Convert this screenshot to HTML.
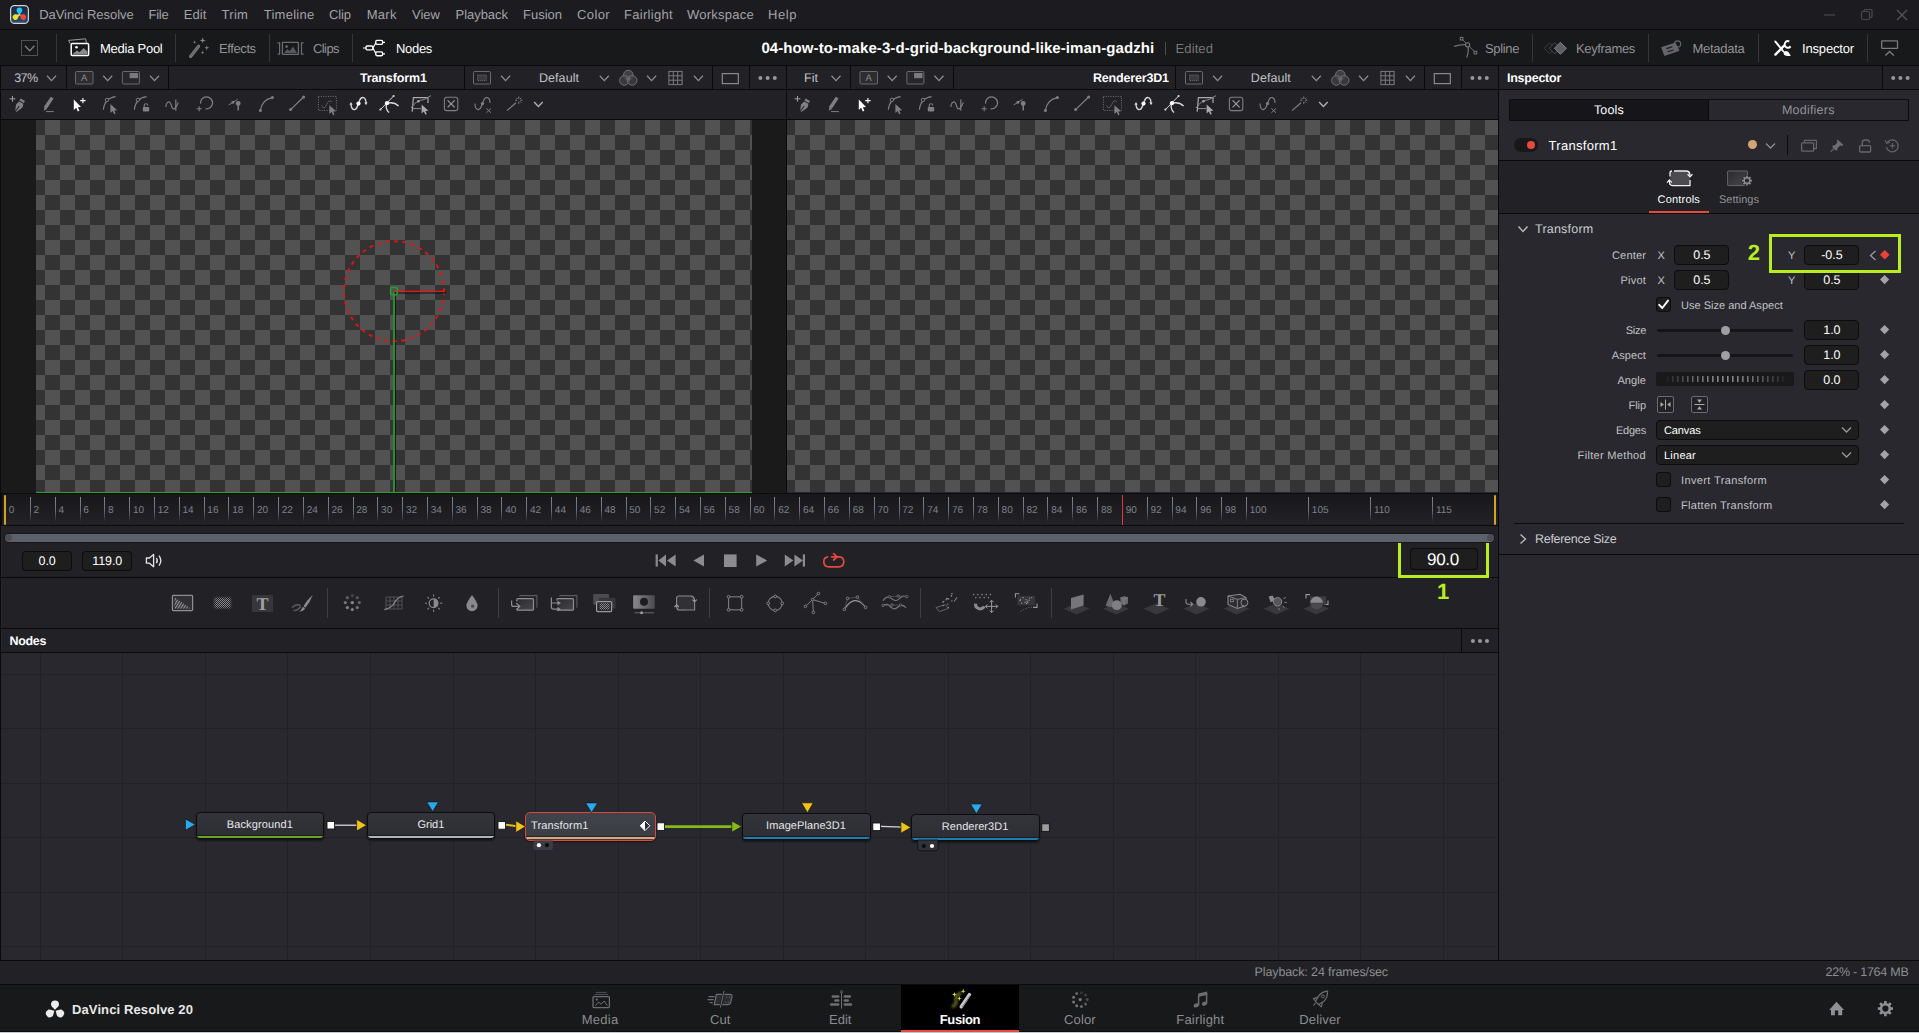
<!DOCTYPE html>
<html lang="en"><head><meta charset="utf-8"><title>DaVinci Resolve - Fusion</title>
<style>
html,body{margin:0;padding:0;background:#28282e;}
body{text-rendering:geometricPrecision;width:1919px;height:1033px;position:relative;overflow:hidden;font-family:"Liberation Sans",sans-serif;}
#app{position:absolute;left:0;top:0;width:1919px;height:1033px;overflow:hidden;}
#app div,#app span,#app svg{position:absolute;display:block;}
#app span{white-space:pre;}
#app svg{overflow:visible;}
</style></head><body><div id="app">
<div style="left:0px;top:0px;width:1919px;height:29px;background:#1c1b20;"></div>
<div style="left:0px;top:29px;width:1919px;height:1px;background:#0a0a0b;"></div>
<div style="left:0px;top:30px;width:1919px;height:35px;background:#18191b;"></div>
<div style="left:0px;top:65px;width:1919px;height:1px;background:#0a0a0b;"></div>
<div style="left:0px;top:66px;width:1498px;height:23px;background:#212126;"></div>
<div style="left:0px;top:89px;width:1498px;height:1px;background:#0a0a0b;"></div>
<div style="left:0px;top:90px;width:1498px;height:29px;background:#212126;"></div>
<div style="left:0px;top:119px;width:1498px;height:1px;background:#0a0a0b;"></div>
<div style="left:1px;top:120px;width:785px;height:373px;background:#1a1a1a;"></div>
<div style="left:36px;top:120px;width:716px;height:372px;background-image:conic-gradient(#525252 25%,#333333 0 50%,#525252 0 75%,#333333 0);background-size:30px 30px;background-position:-6px 0px;"></div>
<div style="left:36px;top:492px;width:716px;height:1px;background:#2ba334;"></div>
<div style="left:787px;top:120px;width:711px;height:372px;background-image:conic-gradient(#525252 25%,#333333 0 50%,#525252 0 75%,#333333 0);background-size:30px 30px;background-position:-7px 0px;"></div>
<div style="left:786px;top:66px;width:1px;height:427px;background:#0a0a0b;"></div>
<div style="left:0px;top:66px;width:1px;height:919px;background:#0a0a0b;"></div>
<div style="left:1498px;top:66px;width:1px;height:895px;background:#0a0a0b;"></div>
<div style="left:0px;top:493px;width:1498px;height:1px;background:#0a0a0b;"></div>
<div style="left:2px;top:494px;width:1496px;height:31px;background:linear-gradient(#18181b,#222227);"></div>
<div style="left:0px;top:525px;width:1498px;height:1px;background:#0a0a0b;"></div>
<div style="left:0px;top:493px;width:2px;height:33px;background:#0a0a0b;"></div>
<div style="left:2px;top:526px;width:1496px;height:51px;background:#212126;"></div>
<div style="left:0px;top:577px;width:1498px;height:1px;background:#0a0a0b;"></div>
<div style="left:2px;top:578px;width:1496px;height:50px;background:#212126;"></div>
<div style="left:0px;top:628px;width:1498px;height:1px;background:#0a0a0b;"></div>
<div style="left:2px;top:629px;width:1496px;height:23px;background:#212126;"></div>
<div style="left:0px;top:652px;width:1498px;height:1px;background:#0a0a0b;"></div>
<div style="left:1px;top:653px;width:1497px;height:307px;background:#28282e;"></div>
<div style="left:40px;top:653px;width:1px;height:307px;background:#212126;"></div>
<div style="left:122px;top:653px;width:1px;height:307px;background:#212126;"></div>
<div style="left:205px;top:653px;width:1px;height:307px;background:#212126;"></div>
<div style="left:287px;top:653px;width:1px;height:307px;background:#212126;"></div>
<div style="left:370px;top:653px;width:1px;height:307px;background:#212126;"></div>
<div style="left:453px;top:653px;width:1px;height:307px;background:#212126;"></div>
<div style="left:535px;top:653px;width:1px;height:307px;background:#212126;"></div>
<div style="left:618px;top:653px;width:1px;height:307px;background:#212126;"></div>
<div style="left:700px;top:653px;width:1px;height:307px;background:#212126;"></div>
<div style="left:783px;top:653px;width:1px;height:307px;background:#212126;"></div>
<div style="left:865px;top:653px;width:1px;height:307px;background:#212126;"></div>
<div style="left:948px;top:653px;width:1px;height:307px;background:#212126;"></div>
<div style="left:1030px;top:653px;width:1px;height:307px;background:#212126;"></div>
<div style="left:1113px;top:653px;width:1px;height:307px;background:#212126;"></div>
<div style="left:1195px;top:653px;width:1px;height:307px;background:#212126;"></div>
<div style="left:1278px;top:653px;width:1px;height:307px;background:#212126;"></div>
<div style="left:1360px;top:653px;width:1px;height:307px;background:#212126;"></div>
<div style="left:1443px;top:653px;width:1px;height:307px;background:#212126;"></div>
<div style="left:1px;top:674px;width:1497px;height:1px;background:#212126;"></div>
<div style="left:1px;top:728px;width:1497px;height:1px;background:#212126;"></div>
<div style="left:1px;top:783px;width:1497px;height:1px;background:#212126;"></div>
<div style="left:1px;top:837px;width:1497px;height:1px;background:#212126;"></div>
<div style="left:1px;top:892px;width:1497px;height:1px;background:#212126;"></div>
<div style="left:1px;top:946px;width:1497px;height:1px;background:#212126;"></div>
<div style="left:0px;top:960px;width:1919px;height:1px;background:#0a0a0b;"></div>
<div style="left:0px;top:961px;width:1919px;height:23px;background:#212126;"></div>
<div style="left:0px;top:984px;width:1919px;height:1px;background:#0a0a0b;"></div>
<div style="left:0px;top:985px;width:1919px;height:47px;background:#18191b;"></div>
<div style="left:0px;top:1031px;width:1919px;height:1px;background:#0b0c0e;"></div>
<div style="left:901px;top:985px;width:118px;height:47px;background:#000;"></div>
<div style="left:901px;top:1030px;width:118px;height:2px;background:#f0483a;"></div>
<div style="left:0px;top:1032px;width:1919px;height:1px;background:#c4c8d0;"></div>
<div style="left:901px;top:1032px;width:118px;height:1px;background:#b2c8d0;"></div>
<div style="left:1499px;top:66px;width:420px;height:23px;background:#212126;"></div>
<div style="left:1499px;top:89px;width:420px;height:1px;background:#0a0a0b;"></div>
<div style="left:1499px;top:90px;width:420px;height:870px;background:#28282e;"></div>
<span style="left:39.20px;top:6px;font-size:13px;line-height:18px;color:#a3a3a7;letter-spacing:-0.042px;">DaVinci Resolve</span>
<span style="left:148.50px;top:6px;font-size:13px;line-height:18px;color:#a3a3a7;letter-spacing:-0.237px;">File</span>
<span style="left:183.70px;top:6px;font-size:13px;line-height:18px;color:#a3a3a7;letter-spacing:0.100px;">Edit</span>
<span style="left:221.50px;top:6px;font-size:13px;line-height:18px;color:#a3a3a7;letter-spacing:0.299px;">Trim</span>
<span style="left:263.70px;top:6px;font-size:13px;line-height:18px;color:#a3a3a7;letter-spacing:0.270px;">Timeline</span>
<span style="left:329.00px;top:6px;font-size:13px;line-height:18px;color:#a3a3a7;letter-spacing:-0.099px;">Clip</span>
<span style="left:366.70px;top:6px;font-size:13px;line-height:18px;color:#a3a3a7;letter-spacing:0.278px;">Mark</span>
<span style="left:412.00px;top:6px;font-size:13px;line-height:18px;color:#a3a3a7;letter-spacing:0.015px;">View</span>
<span style="left:455.50px;top:6px;font-size:13px;line-height:18px;color:#a3a3a7;letter-spacing:-0.031px;">Playback</span>
<span style="left:523.00px;top:6px;font-size:13px;line-height:18px;color:#a3a3a7;letter-spacing:-0.003px;">Fusion</span>
<span style="left:577.00px;top:6px;font-size:13px;line-height:18px;color:#a3a3a7;letter-spacing:0.387px;">Color</span>
<span style="left:624.00px;top:6px;font-size:13px;line-height:18px;color:#a3a3a7;letter-spacing:0.307px;">Fairlight</span>
<span style="left:687.00px;top:6px;font-size:13px;line-height:18px;color:#a3a3a7;letter-spacing:0.247px;">Workspace</span>
<span style="left:768.00px;top:6px;font-size:13px;line-height:18px;color:#a3a3a7;letter-spacing:0.566px;">Help</span>
<span style="left:100.00px;top:40px;font-size:13px;line-height:18px;color:#ffffff;letter-spacing:-0.253px;">Media Pool</span>
<span style="left:219.00px;top:40px;font-size:13px;line-height:18px;color:#929296;letter-spacing:-0.400px;">Effects</span>
<span style="left:313.00px;top:40px;font-size:13px;line-height:18px;color:#929296;letter-spacing:-0.579px;">Clips</span>
<span style="left:396.00px;top:40px;font-size:13px;line-height:18px;color:#ffffff;letter-spacing:-0.315px;">Nodes</span>
<span style="left:761.40px;top:39px;font-size:15px;line-height:20px;color:#ffffff;letter-spacing:0.090px;font-weight:700;">04-how-to-make-3-d-grid-background-like-iman-gadzhi</span>
<span style="left:1175.60px;top:40px;font-size:13px;line-height:18px;color:#77777b;letter-spacing:0.090px;">Edited</span>
<span style="left:1485.00px;top:40px;font-size:13px;line-height:18px;color:#929296;letter-spacing:-0.356px;">Spline</span>
<span style="left:1576.00px;top:40px;font-size:13px;line-height:18px;color:#929296;letter-spacing:-0.348px;">Keyframes</span>
<span style="left:1692.40px;top:40px;font-size:13px;line-height:18px;color:#929296;letter-spacing:-0.250px;">Metadata</span>
<span style="left:1802.00px;top:40px;font-size:13px;line-height:18px;color:#ffffff;letter-spacing:-0.163px;">Inspector</span>
<div style="left:56.0px;top:34px;width:1px;height:28px;background:#36363b;"></div>
<div style="left:175.0px;top:34px;width:1px;height:28px;background:#36363b;"></div>
<div style="left:268.5px;top:34px;width:1px;height:28px;background:#36363b;"></div>
<div style="left:351.5px;top:34px;width:1px;height:28px;background:#36363b;"></div>
<div style="left:1531.5px;top:34px;width:1px;height:28px;background:#36363b;"></div>
<div style="left:1647.5px;top:34px;width:1px;height:28px;background:#36363b;"></div>
<div style="left:1757.5px;top:34px;width:1px;height:28px;background:#36363b;"></div>
<div style="left:1866.5px;top:34px;width:1px;height:28px;background:#36363b;"></div>
<div style="left:1164.5px;top:42px;width:1px;height:13px;background:#4a4a4f;"></div>
<span style="left:14.20px;top:70px;font-size:12.5px;line-height:16px;color:#c2c2c6;letter-spacing:-0.573px;">37%</span>
<span style="left:804.00px;top:70px;font-size:12.5px;line-height:16px;color:#c2c2c6;letter-spacing:0.038px;">Fit</span>
<span style="left:360.00px;top:70px;font-size:12.5px;line-height:16px;color:#ffffff;letter-spacing:-0.138px;font-weight:700;">Transform1</span>
<span style="left:1093.00px;top:70px;font-size:12.5px;line-height:16px;color:#ffffff;letter-spacing:-0.183px;font-weight:700;">Renderer3D1</span>
<span style="left:539.00px;top:70px;font-size:12.5px;line-height:16px;color:#c2c2c6;letter-spacing:0.057px;">Default</span>
<span style="left:1250.80px;top:70px;font-size:12.5px;line-height:16px;color:#c2c2c6;letter-spacing:0.057px;">Default</span>
<div style="left:66px;top:66px;width:1px;height:23px;background:#0a0a0b;"></div>
<div style="left:168px;top:66px;width:1px;height:23px;background:#0a0a0b;"></div>
<div style="left:464px;top:66px;width:1px;height:23px;background:#0a0a0b;"></div>
<div style="left:712px;top:66px;width:1px;height:23px;background:#0a0a0b;"></div>
<div style="left:749px;top:66px;width:1px;height:23px;background:#0a0a0b;"></div>
<div style="left:850px;top:66px;width:1px;height:23px;background:#0a0a0b;"></div>
<div style="left:953px;top:66px;width:1px;height:23px;background:#0a0a0b;"></div>
<div style="left:1175px;top:66px;width:1px;height:23px;background:#0a0a0b;"></div>
<div style="left:1424px;top:66px;width:1px;height:23px;background:#0a0a0b;"></div>
<div style="left:1461px;top:66px;width:1px;height:23px;background:#0a0a0b;"></div>
<div style="left:1882px;top:66px;width:1px;height:23px;background:#0a0a0b;"></div>
<span style="left:1507.00px;top:70px;font-size:12.5px;line-height:16px;color:#ffffff;letter-spacing:-0.251px;font-weight:700;">Inspector</span>
<div style="left:23px;top:552px;width:48px;height:18px;background:#1e1e1f;border-radius:3px;box-shadow:0 0 0 1px #0c0c0d;"></div>
<div style="left:83px;top:552px;width:48px;height:18px;background:#1e1e1f;border-radius:3px;box-shadow:0 0 0 1px #0c0c0d;"></div>
<span style="left:38.54px;top:553px;font-size:12.5px;line-height:16px;color:#ffffff;letter-spacing:-0.087px;">0.0</span>
<span style="left:92.25px;top:553px;font-size:12.5px;line-height:16px;color:#ffffff;letter-spacing:-0.091px;">119.0</span>
<div style="left:1411px;top:549px;width:66px;height:20px;background:#1e1e1f;border-radius:3px;box-shadow:0 0 0 1px #0c0c0d;"></div>
<span style="left:1427.12px;top:549px;font-size:17px;line-height:22px;color:#ffffff;letter-spacing:-0.331px;">90.0</span>
<div style="left:1398px;top:540px;width:85px;height:32px;border:3px solid #b8ee1e;"></div>
<span style="left:1437.08px;top:577px;font-size:22px;line-height:30px;color:#b8ee1e;letter-spacing:0.000px;font-weight:700;">1</span>
<span style="left:9.50px;top:633px;font-size:12.5px;line-height:16px;color:#ffffff;letter-spacing:-0.340px;font-weight:700;">Nodes</span>
<span style="left:1254.60px;top:964px;font-size:12.5px;line-height:16px;color:#8e8e92;letter-spacing:-0.120px;">Playback: 24 frames/sec</span>
<span style="left:1825.50px;top:964px;font-size:12.5px;line-height:16px;color:#8e8e92;letter-spacing:-0.242px;">22% - 1764 MB</span>
<span style="left:8.80px;top:504px;font-size:10px;line-height:14px;color:#7e8189;letter-spacing:0.000px;">0</span>
<div style="left:29.8px;top:497px;width:1px;height:25px;background:linear-gradient(#84848a,#6c6c72 55%,rgba(106,106,112,0));"></div>
<span style="left:33.62px;top:504px;font-size:10px;line-height:14px;color:#7e8189;letter-spacing:0.000px;">2</span>
<div style="left:54.6px;top:497px;width:1px;height:25px;background:linear-gradient(#84848a,#6c6c72 55%,rgba(106,106,112,0));"></div>
<span style="left:58.44px;top:504px;font-size:10px;line-height:14px;color:#7e8189;letter-spacing:0.000px;">4</span>
<div style="left:79.5px;top:497px;width:1px;height:25px;background:linear-gradient(#84848a,#6c6c72 55%,rgba(106,106,112,0));"></div>
<span style="left:83.26px;top:504px;font-size:10px;line-height:14px;color:#7e8189;letter-spacing:0.000px;">6</span>
<div style="left:104.3px;top:497px;width:1px;height:25px;background:linear-gradient(#84848a,#6c6c72 55%,rgba(106,106,112,0));"></div>
<span style="left:108.08px;top:504px;font-size:10px;line-height:14px;color:#7e8189;letter-spacing:0.000px;">8</span>
<div style="left:129.1px;top:497px;width:1px;height:25px;background:linear-gradient(#84848a,#6c6c72 55%,rgba(106,106,112,0));"></div>
<span style="left:132.90px;top:504px;font-size:10px;line-height:14px;color:#7e8189;letter-spacing:-0.000px;">10</span>
<div style="left:153.9px;top:497px;width:1px;height:25px;background:linear-gradient(#84848a,#6c6c72 55%,rgba(106,106,112,0));"></div>
<span style="left:157.72px;top:504px;font-size:10px;line-height:14px;color:#7e8189;letter-spacing:-0.000px;">12</span>
<div style="left:178.7px;top:497px;width:1px;height:25px;background:linear-gradient(#84848a,#6c6c72 55%,rgba(106,106,112,0));"></div>
<span style="left:182.54px;top:504px;font-size:10px;line-height:14px;color:#7e8189;letter-spacing:-0.000px;">14</span>
<div style="left:203.6px;top:497px;width:1px;height:25px;background:linear-gradient(#84848a,#6c6c72 55%,rgba(106,106,112,0));"></div>
<span style="left:207.36px;top:504px;font-size:10px;line-height:14px;color:#7e8189;letter-spacing:-0.000px;">16</span>
<div style="left:228.4px;top:497px;width:1px;height:25px;background:linear-gradient(#84848a,#6c6c72 55%,rgba(106,106,112,0));"></div>
<span style="left:232.18px;top:504px;font-size:10px;line-height:14px;color:#7e8189;letter-spacing:-0.000px;">18</span>
<div style="left:253.2px;top:497px;width:1px;height:25px;background:linear-gradient(#84848a,#6c6c72 55%,rgba(106,106,112,0));"></div>
<span style="left:257.00px;top:504px;font-size:10px;line-height:14px;color:#7e8189;letter-spacing:-0.000px;">20</span>
<div style="left:278.0px;top:497px;width:1px;height:25px;background:linear-gradient(#84848a,#6c6c72 55%,rgba(106,106,112,0));"></div>
<span style="left:281.82px;top:504px;font-size:10px;line-height:14px;color:#7e8189;letter-spacing:-0.000px;">22</span>
<div style="left:302.8px;top:497px;width:1px;height:25px;background:linear-gradient(#84848a,#6c6c72 55%,rgba(106,106,112,0));"></div>
<span style="left:306.64px;top:504px;font-size:10px;line-height:14px;color:#7e8189;letter-spacing:-0.000px;">24</span>
<div style="left:327.7px;top:497px;width:1px;height:25px;background:linear-gradient(#84848a,#6c6c72 55%,rgba(106,106,112,0));"></div>
<span style="left:331.46px;top:504px;font-size:10px;line-height:14px;color:#7e8189;letter-spacing:-0.000px;">26</span>
<div style="left:352.5px;top:497px;width:1px;height:25px;background:linear-gradient(#84848a,#6c6c72 55%,rgba(106,106,112,0));"></div>
<span style="left:356.28px;top:504px;font-size:10px;line-height:14px;color:#7e8189;letter-spacing:-0.000px;">28</span>
<div style="left:377.3px;top:497px;width:1px;height:25px;background:linear-gradient(#84848a,#6c6c72 55%,rgba(106,106,112,0));"></div>
<span style="left:381.10px;top:504px;font-size:10px;line-height:14px;color:#7e8189;letter-spacing:-0.000px;">30</span>
<div style="left:402.1px;top:497px;width:1px;height:25px;background:linear-gradient(#84848a,#6c6c72 55%,rgba(106,106,112,0));"></div>
<span style="left:405.92px;top:504px;font-size:10px;line-height:14px;color:#7e8189;letter-spacing:-0.000px;">32</span>
<div style="left:426.9px;top:497px;width:1px;height:25px;background:linear-gradient(#84848a,#6c6c72 55%,rgba(106,106,112,0));"></div>
<span style="left:430.74px;top:504px;font-size:10px;line-height:14px;color:#7e8189;letter-spacing:-0.000px;">34</span>
<div style="left:451.8px;top:497px;width:1px;height:25px;background:linear-gradient(#84848a,#6c6c72 55%,rgba(106,106,112,0));"></div>
<span style="left:455.56px;top:504px;font-size:10px;line-height:14px;color:#7e8189;letter-spacing:-0.000px;">36</span>
<div style="left:476.6px;top:497px;width:1px;height:25px;background:linear-gradient(#84848a,#6c6c72 55%,rgba(106,106,112,0));"></div>
<span style="left:480.38px;top:504px;font-size:10px;line-height:14px;color:#7e8189;letter-spacing:-0.000px;">38</span>
<div style="left:501.4px;top:497px;width:1px;height:25px;background:linear-gradient(#84848a,#6c6c72 55%,rgba(106,106,112,0));"></div>
<span style="left:505.20px;top:504px;font-size:10px;line-height:14px;color:#7e8189;letter-spacing:-0.000px;">40</span>
<div style="left:526.2px;top:497px;width:1px;height:25px;background:linear-gradient(#84848a,#6c6c72 55%,rgba(106,106,112,0));"></div>
<span style="left:530.02px;top:504px;font-size:10px;line-height:14px;color:#7e8189;letter-spacing:0.000px;">42</span>
<div style="left:551.0px;top:497px;width:1px;height:25px;background:linear-gradient(#84848a,#6c6c72 55%,rgba(106,106,112,0));"></div>
<span style="left:554.84px;top:504px;font-size:10px;line-height:14px;color:#7e8189;letter-spacing:0.000px;">44</span>
<div style="left:575.9px;top:497px;width:1px;height:25px;background:linear-gradient(#84848a,#6c6c72 55%,rgba(106,106,112,0));"></div>
<span style="left:579.66px;top:504px;font-size:10px;line-height:14px;color:#7e8189;letter-spacing:0.000px;">46</span>
<div style="left:600.7px;top:497px;width:1px;height:25px;background:linear-gradient(#84848a,#6c6c72 55%,rgba(106,106,112,0));"></div>
<span style="left:604.48px;top:504px;font-size:10px;line-height:14px;color:#7e8189;letter-spacing:0.000px;">48</span>
<div style="left:625.5px;top:497px;width:1px;height:25px;background:linear-gradient(#84848a,#6c6c72 55%,rgba(106,106,112,0));"></div>
<span style="left:629.30px;top:504px;font-size:10px;line-height:14px;color:#7e8189;letter-spacing:0.000px;">50</span>
<div style="left:650.3px;top:497px;width:1px;height:25px;background:linear-gradient(#84848a,#6c6c72 55%,rgba(106,106,112,0));"></div>
<span style="left:654.12px;top:504px;font-size:10px;line-height:14px;color:#7e8189;letter-spacing:0.000px;">52</span>
<div style="left:675.1px;top:497px;width:1px;height:25px;background:linear-gradient(#84848a,#6c6c72 55%,rgba(106,106,112,0));"></div>
<span style="left:678.94px;top:504px;font-size:10px;line-height:14px;color:#7e8189;letter-spacing:0.000px;">54</span>
<div style="left:700.0px;top:497px;width:1px;height:25px;background:linear-gradient(#84848a,#6c6c72 55%,rgba(106,106,112,0));"></div>
<span style="left:703.76px;top:504px;font-size:10px;line-height:14px;color:#7e8189;letter-spacing:0.000px;">56</span>
<div style="left:724.8px;top:497px;width:1px;height:25px;background:linear-gradient(#84848a,#6c6c72 55%,rgba(106,106,112,0));"></div>
<span style="left:728.58px;top:504px;font-size:10px;line-height:14px;color:#7e8189;letter-spacing:0.000px;">58</span>
<div style="left:749.6px;top:497px;width:1px;height:25px;background:linear-gradient(#84848a,#6c6c72 55%,rgba(106,106,112,0));"></div>
<span style="left:753.40px;top:504px;font-size:10px;line-height:14px;color:#7e8189;letter-spacing:0.000px;">60</span>
<div style="left:774.4px;top:497px;width:1px;height:25px;background:linear-gradient(#84848a,#6c6c72 55%,rgba(106,106,112,0));"></div>
<span style="left:778.22px;top:504px;font-size:10px;line-height:14px;color:#7e8189;letter-spacing:0.000px;">62</span>
<div style="left:799.2px;top:497px;width:1px;height:25px;background:linear-gradient(#84848a,#6c6c72 55%,rgba(106,106,112,0));"></div>
<span style="left:803.04px;top:504px;font-size:10px;line-height:14px;color:#7e8189;letter-spacing:0.000px;">64</span>
<div style="left:824.1px;top:497px;width:1px;height:25px;background:linear-gradient(#84848a,#6c6c72 55%,rgba(106,106,112,0));"></div>
<span style="left:827.86px;top:504px;font-size:10px;line-height:14px;color:#7e8189;letter-spacing:0.000px;">66</span>
<div style="left:848.9px;top:497px;width:1px;height:25px;background:linear-gradient(#84848a,#6c6c72 55%,rgba(106,106,112,0));"></div>
<span style="left:852.68px;top:504px;font-size:10px;line-height:14px;color:#7e8189;letter-spacing:0.000px;">68</span>
<div style="left:873.7px;top:497px;width:1px;height:25px;background:linear-gradient(#84848a,#6c6c72 55%,rgba(106,106,112,0));"></div>
<span style="left:877.50px;top:504px;font-size:10px;line-height:14px;color:#7e8189;letter-spacing:0.000px;">70</span>
<div style="left:898.5px;top:497px;width:1px;height:25px;background:linear-gradient(#84848a,#6c6c72 55%,rgba(106,106,112,0));"></div>
<span style="left:902.32px;top:504px;font-size:10px;line-height:14px;color:#7e8189;letter-spacing:0.000px;">72</span>
<div style="left:923.3px;top:497px;width:1px;height:25px;background:linear-gradient(#84848a,#6c6c72 55%,rgba(106,106,112,0));"></div>
<span style="left:927.14px;top:504px;font-size:10px;line-height:14px;color:#7e8189;letter-spacing:0.000px;">74</span>
<div style="left:948.2px;top:497px;width:1px;height:25px;background:linear-gradient(#84848a,#6c6c72 55%,rgba(106,106,112,0));"></div>
<span style="left:951.96px;top:504px;font-size:10px;line-height:14px;color:#7e8189;letter-spacing:0.000px;">76</span>
<div style="left:973.0px;top:497px;width:1px;height:25px;background:linear-gradient(#84848a,#6c6c72 55%,rgba(106,106,112,0));"></div>
<span style="left:976.78px;top:504px;font-size:10px;line-height:14px;color:#7e8189;letter-spacing:0.000px;">78</span>
<div style="left:997.8px;top:497px;width:1px;height:25px;background:linear-gradient(#84848a,#6c6c72 55%,rgba(106,106,112,0));"></div>
<span style="left:1001.60px;top:504px;font-size:10px;line-height:14px;color:#7e8189;letter-spacing:0.000px;">80</span>
<div style="left:1022.6px;top:497px;width:1px;height:25px;background:linear-gradient(#84848a,#6c6c72 55%,rgba(106,106,112,0));"></div>
<span style="left:1026.42px;top:504px;font-size:10px;line-height:14px;color:#7e8189;letter-spacing:0.000px;">82</span>
<div style="left:1047.4px;top:497px;width:1px;height:25px;background:linear-gradient(#84848a,#6c6c72 55%,rgba(106,106,112,0));"></div>
<span style="left:1051.24px;top:504px;font-size:10px;line-height:14px;color:#7e8189;letter-spacing:0.000px;">84</span>
<div style="left:1072.3px;top:497px;width:1px;height:25px;background:linear-gradient(#84848a,#6c6c72 55%,rgba(106,106,112,0));"></div>
<span style="left:1076.06px;top:504px;font-size:10px;line-height:14px;color:#7e8189;letter-spacing:0.000px;">86</span>
<div style="left:1097.1px;top:497px;width:1px;height:25px;background:linear-gradient(#84848a,#6c6c72 55%,rgba(106,106,112,0));"></div>
<span style="left:1100.88px;top:504px;font-size:10px;line-height:14px;color:#7e8189;letter-spacing:0.000px;">88</span>
<div style="left:1121.9px;top:497px;width:1px;height:25px;background:linear-gradient(#84848a,#6c6c72 55%,rgba(106,106,112,0));"></div>
<span style="left:1125.70px;top:504px;font-size:10px;line-height:14px;color:#7e8189;letter-spacing:0.000px;">90</span>
<div style="left:1146.7px;top:497px;width:1px;height:25px;background:linear-gradient(#84848a,#6c6c72 55%,rgba(106,106,112,0));"></div>
<span style="left:1150.52px;top:504px;font-size:10px;line-height:14px;color:#7e8189;letter-spacing:0.000px;">92</span>
<div style="left:1171.5px;top:497px;width:1px;height:25px;background:linear-gradient(#84848a,#6c6c72 55%,rgba(106,106,112,0));"></div>
<span style="left:1175.34px;top:504px;font-size:10px;line-height:14px;color:#7e8189;letter-spacing:0.000px;">94</span>
<div style="left:1196.4px;top:497px;width:1px;height:25px;background:linear-gradient(#84848a,#6c6c72 55%,rgba(106,106,112,0));"></div>
<span style="left:1200.16px;top:504px;font-size:10px;line-height:14px;color:#7e8189;letter-spacing:0.000px;">96</span>
<div style="left:1221.2px;top:497px;width:1px;height:25px;background:linear-gradient(#84848a,#6c6c72 55%,rgba(106,106,112,0));"></div>
<span style="left:1224.98px;top:504px;font-size:10px;line-height:14px;color:#7e8189;letter-spacing:0.000px;">98</span>
<div style="left:1246.0px;top:497px;width:1px;height:25px;background:linear-gradient(#84848a,#6c6c72 55%,rgba(106,106,112,0));"></div>
<span style="left:1249.80px;top:504px;font-size:10px;line-height:14px;color:#7e8189;letter-spacing:-0.000px;">100</span>
<div style="left:1308.0px;top:497px;width:1px;height:25px;background:linear-gradient(#84848a,#6c6c72 55%,rgba(106,106,112,0));"></div>
<span style="left:1311.85px;top:504px;font-size:10px;line-height:14px;color:#7e8189;letter-spacing:-0.000px;">105</span>
<div style="left:1370.1px;top:497px;width:1px;height:25px;background:linear-gradient(#84848a,#6c6c72 55%,rgba(106,106,112,0));"></div>
<span style="left:1373.90px;top:504px;font-size:10px;line-height:14px;color:#7e8189;letter-spacing:-0.000px;">110</span>
<div style="left:1432.2px;top:497px;width:1px;height:25px;background:linear-gradient(#84848a,#6c6c72 55%,rgba(106,106,112,0));"></div>
<span style="left:1435.95px;top:504px;font-size:10px;line-height:14px;color:#7e8189;letter-spacing:-0.000px;">115</span>
<div style="left:4px;top:495px;width:2.4px;height:29.6px;background:#d2a228;border-radius:1.2px;"></div>
<div style="left:1493.8px;top:495px;width:2.4px;height:29.6px;background:#d2a228;border-radius:1.2px;"></div>
<div style="left:1121.5px;top:495px;width:1.5px;height:30px;background:#e03a3a;"></div>
<div style="left:5px;top:534px;width:1489px;height:7.6px;background:#5b606a;border-radius:4px;box-shadow:0 0 0 1px #17171a;"></div>
<div style="left:5.4px;top:534.4px;width:6.8px;height:6.8px;background:#4a4d55;border-radius:4px;"></div>
<div style="left:1486.8px;top:534.4px;width:6.8px;height:6.8px;background:#4a4d55;border-radius:4px;"></div>
<span style="left:72.00px;top:1001px;font-size:13px;line-height:18px;color:#e8e8e8;letter-spacing:0.112px;font-weight:700;">DaVinci Resolve 20</span>
<span style="left:581.70px;top:1011px;font-size:13px;line-height:18px;color:#8c8c90;letter-spacing:0.279px;">Media</span>
<span style="left:709.90px;top:1011px;font-size:13px;line-height:18px;color:#8c8c90;letter-spacing:0.124px;">Cut</span>
<span style="left:829.00px;top:1011px;font-size:13px;line-height:18px;color:#8c8c90;letter-spacing:-0.000px;">Edit</span>
<span style="left:939.80px;top:1011px;font-size:13px;line-height:18px;color:#ffffff;letter-spacing:-0.400px;font-weight:700;">Fusion</span>
<span style="left:1064.00px;top:1011px;font-size:13px;line-height:18px;color:#8c8c90;letter-spacing:0.147px;">Color</span>
<span style="left:1176.30px;top:1011px;font-size:13px;line-height:18px;color:#8c8c90;letter-spacing:0.196px;">Fairlight</span>
<span style="left:1299.30px;top:1011px;font-size:13px;line-height:18px;color:#8c8c90;letter-spacing:0.150px;">Deliver</span>
<div style="left:1509px;top:99px;width:400px;height:22px;background:#0c0c0d;border-radius:1.5px;"></div>
<div style="left:1510px;top:100px;width:198px;height:20px;background:#16161a;border-radius:1px 0 0 1px;"></div>
<div style="left:1709px;top:100px;width:199px;height:20px;background:#28282e;border-radius:0 1px 1px 0;"></div>
<span style="left:1594.00px;top:102px;font-size:12.5px;line-height:16px;color:#ffffff;letter-spacing:0.124px;">Tools</span>
<span style="left:1781.93px;top:102px;font-size:12.5px;line-height:16px;color:#929296;letter-spacing:0.225px;">Modifiers</span>
<div style="left:1499px;top:160px;width:420px;height:1px;background:#0a0a0b;"></div>
<div style="left:1499px;top:161px;width:420px;height:52px;background:#212126;"></div>
<div style="left:1514px;top:138px;width:24px;height:14px;background:#18181b;border-radius:7px;"></div>
<div style="left:1526.6px;top:140.5px;width:8.8px;height:8.8px;background:#e64a3c;border-radius:5px;"></div>
<span style="left:1548.50px;top:137px;font-size:13px;line-height:18px;color:#ffffff;letter-spacing:0.303px;">Transform1</span>
<div style="left:1747.5px;top:140px;width:9px;height:9px;background:#d6a574;border-radius:5px;"></div>
<div style="left:1787px;top:135px;width:1px;height:20px;background:#0c0c0d;"></div>
<span style="left:1657.60px;top:193px;font-size:11px;line-height:14px;color:#ffffff;letter-spacing:0.180px;">Controls</span>
<span style="left:1719.00px;top:193px;font-size:11px;line-height:14px;color:#929296;letter-spacing:0.032px;">Settings</span>
<div style="left:1649px;top:211px;width:60px;height:2px;background:#e64b3d;"></div>
<div style="left:1499px;top:213px;width:420px;height:1px;background:#0a0a0b;"></div>
<span style="left:1535.00px;top:221px;font-size:12.5px;line-height:16px;color:#cacace;letter-spacing:0.213px;">Transform</span>
<span style="left:1612.00px;top:249px;font-size:11px;line-height:14px;color:#c2c2c6;letter-spacing:0.164px;">Center</span>
<span style="left:1620.60px;top:274px;font-size:11px;line-height:14px;color:#c2c2c6;letter-spacing:0.189px;">Pivot</span>
<span style="left:1625.80px;top:324px;font-size:11px;line-height:14px;color:#c2c2c6;letter-spacing:-0.300px;">Size</span>
<span style="left:1611.80px;top:349px;font-size:11px;line-height:14px;color:#c2c2c6;letter-spacing:0.095px;">Aspect</span>
<span style="left:1617.40px;top:374px;font-size:11px;line-height:14px;color:#c2c2c6;letter-spacing:0.093px;">Angle</span>
<span style="left:1628.50px;top:399px;font-size:11px;line-height:14px;color:#c2c2c6;letter-spacing:-0.056px;">Flip</span>
<span style="left:1615.90px;top:424px;font-size:11px;line-height:14px;color:#c2c2c6;letter-spacing:-0.218px;">Edges</span>
<span style="left:1577.60px;top:449px;font-size:11px;line-height:14px;color:#c2c2c6;letter-spacing:0.324px;">Filter Method</span>
<span style="left:1657.60px;top:249px;font-size:11px;line-height:14px;color:#c2c2c6;letter-spacing:0.000px;">X</span>
<span style="left:1788.00px;top:249px;font-size:11px;line-height:14px;color:#c2c2c6;letter-spacing:0.000px;">Y</span>
<div style="left:1675px;top:246px;width:53px;height:18px;background:#1e1e1f;border-radius:3.5px;box-shadow:0 0 0 1px #0c0c0d;"></div>
<span style="left:1693.34px;top:247px;font-size:12.5px;line-height:16px;color:#ffffff;letter-spacing:-0.087px;">0.5</span>
<div style="left:1805px;top:246px;width:53px;height:18px;background:#1e1e1f;border-radius:3.5px;box-shadow:0 0 0 1px #0c0c0d;"></div>
<span style="left:1821.29px;top:247px;font-size:12.5px;line-height:16px;color:#ffffff;letter-spacing:-0.081px;">-0.5</span>
<span style="left:1657.60px;top:274px;font-size:11px;line-height:14px;color:#c2c2c6;letter-spacing:0.000px;">X</span>
<span style="left:1788.00px;top:274px;font-size:11px;line-height:14px;color:#c2c2c6;letter-spacing:0.000px;">Y</span>
<div style="left:1675px;top:271px;width:53px;height:18px;background:#1e1e1f;border-radius:3.5px;box-shadow:0 0 0 1px #0c0c0d;"></div>
<span style="left:1693.34px;top:272px;font-size:12.5px;line-height:16px;color:#ffffff;letter-spacing:-0.087px;">0.5</span>
<div style="left:1805px;top:271px;width:53px;height:18px;background:#1e1e1f;border-radius:3.5px;box-shadow:0 0 0 1px #0c0c0d;"></div>
<span style="left:1823.34px;top:272px;font-size:12.5px;line-height:16px;color:#ffffff;letter-spacing:-0.087px;">0.5</span>
<div style="left:1805px;top:321px;width:53px;height:18px;background:#1e1e1f;border-radius:3.5px;box-shadow:0 0 0 1px #0c0c0d;"></div>
<span style="left:1823.34px;top:322px;font-size:12.5px;line-height:16px;color:#ffffff;letter-spacing:-0.087px;">1.0</span>
<div style="left:1805px;top:346px;width:53px;height:18px;background:#1e1e1f;border-radius:3.5px;box-shadow:0 0 0 1px #0c0c0d;"></div>
<span style="left:1823.34px;top:347px;font-size:12.5px;line-height:16px;color:#ffffff;letter-spacing:-0.087px;">1.0</span>
<div style="left:1805px;top:371px;width:53px;height:18px;background:#1e1e1f;border-radius:3.5px;box-shadow:0 0 0 1px #0c0c0d;"></div>
<span style="left:1823.34px;top:372px;font-size:12.5px;line-height:16px;color:#ffffff;letter-spacing:-0.087px;">0.0</span>
<div style="left:1657px;top:328.5px;width:136px;height:3px;background:#151517;border-radius:2px;"></div>
<div style="left:1721px;top:325.5px;width:9px;height:9px;background:#a0a0a3;border-radius:5px;"></div>
<div style="left:1657px;top:353.5px;width:136px;height:3px;background:#151517;border-radius:2px;"></div>
<div style="left:1721px;top:350.5px;width:9px;height:9px;background:#a0a0a3;border-radius:5px;"></div>
<div style="left:1656px;top:372px;width:138px;height:14px;background:#19191c;border-radius:2px;"></div>
<svg style="left:1656px;top:372px" width="138" height="14" viewBox="0 0 138 14" ><rect x="6.0" y="4" width="1.6" height="6" fill="#b0b0b4" opacity="0.00"/><rect x="11.0" y="4" width="1.6" height="6" fill="#b0b0b4" opacity="0.09"/><rect x="16.0" y="4" width="1.6" height="6" fill="#b0b0b4" opacity="0.18"/><rect x="21.0" y="4" width="1.6" height="6" fill="#b0b0b4" opacity="0.26"/><rect x="26.0" y="4" width="1.6" height="6" fill="#b0b0b4" opacity="0.34"/><rect x="31.0" y="4" width="1.6" height="6" fill="#b0b0b4" opacity="0.42"/><rect x="36.0" y="4" width="1.6" height="6" fill="#b0b0b4" opacity="0.48"/><rect x="41.0" y="4" width="1.6" height="6" fill="#b0b0b4" opacity="0.55"/><rect x="46.0" y="4" width="1.6" height="6" fill="#b0b0b4" opacity="0.60"/><rect x="51.0" y="4" width="1.6" height="6" fill="#b0b0b4" opacity="0.65"/><rect x="56.0" y="4" width="1.6" height="6" fill="#b0b0b4" opacity="0.69"/><rect x="61.0" y="4" width="1.6" height="6" fill="#b0b0b4" opacity="0.72"/><rect x="66.0" y="4" width="1.6" height="6" fill="#b0b0b4" opacity="0.74"/><rect x="71.0" y="4" width="1.6" height="6" fill="#b0b0b4" opacity="0.75"/><rect x="76.0" y="4" width="1.6" height="6" fill="#b0b0b4" opacity="0.73"/><rect x="81.0" y="4" width="1.6" height="6" fill="#b0b0b4" opacity="0.70"/><rect x="86.0" y="4" width="1.6" height="6" fill="#b0b0b4" opacity="0.66"/><rect x="91.0" y="4" width="1.6" height="6" fill="#b0b0b4" opacity="0.61"/><rect x="96.0" y="4" width="1.6" height="6" fill="#b0b0b4" opacity="0.56"/><rect x="101.0" y="4" width="1.6" height="6" fill="#b0b0b4" opacity="0.50"/><rect x="106.0" y="4" width="1.6" height="6" fill="#b0b0b4" opacity="0.43"/><rect x="111.0" y="4" width="1.6" height="6" fill="#b0b0b4" opacity="0.36"/><rect x="116.0" y="4" width="1.6" height="6" fill="#b0b0b4" opacity="0.28"/><rect x="121.0" y="4" width="1.6" height="6" fill="#b0b0b4" opacity="0.20"/><rect x="126.0" y="4" width="1.6" height="6" fill="#b0b0b4" opacity="0.11"/><rect x="131.0" y="4" width="1.6" height="6" fill="#b0b0b4" opacity="0.02"/></svg>
<div style="left:1657px;top:298px;width:13px;height:13px;background:#1e1e1f;border-radius:2.5px;box-shadow:0 0 0 1px #0c0c0d;"></div>
<div style="left:1657px;top:473px;width:13px;height:13px;background:#1e1e1f;border-radius:2.5px;box-shadow:0 0 0 1px #0c0c0d;"></div>
<div style="left:1657px;top:498px;width:13px;height:13px;background:#1e1e1f;border-radius:2.5px;box-shadow:0 0 0 1px #0c0c0d;"></div>
<svg style="left:1656px;top:297px" width="15" height="15" viewBox="0 0 15 15" ><path d="M3.2 7.8 L6.3 11 L12 3.6" fill="none" stroke="#fff" stroke-width="1.9" stroke-linecap="round" stroke-linejoin="round"/></svg>
<span style="left:1681.00px;top:299px;font-size:11px;line-height:14px;color:#c2c2c6;letter-spacing:0.011px;">Use Size and Aspect</span>
<span style="left:1681.00px;top:474px;font-size:11px;line-height:14px;color:#c2c2c6;letter-spacing:0.371px;">Invert Transform</span>
<span style="left:1681.00px;top:499px;font-size:11px;line-height:14px;color:#c2c2c6;letter-spacing:0.312px;">Flatten Transform</span>
<div style="left:1657px;top:396px;width:15px;height:15px;border:1px solid #6c6c70;border-radius:2px;background:#222226;"></div>
<div style="left:1691px;top:396px;width:15px;height:15px;border:1px solid #6c6c70;border-radius:2px;background:#222226;"></div>
<svg style="left:1657px;top:396px" width="17" height="17" viewBox="0 0 17 17" ><path d="M8.5 3.5V13.5" stroke="#aaa" stroke-width="1"/><path d="M3.5 6 L6.8 8.5 L3.5 11Z M13.5 6 L10.2 8.5 L13.5 11Z" fill="#aaa"/></svg>
<svg style="left:1691px;top:396px" width="17" height="17" viewBox="0 0 17 17" ><path d="M3.5 8.5H13.5" stroke="#aaa" stroke-width="1"/><path d="M6 3.5 L8.5 6.8 L11 3.5Z M6 13.5 L8.5 10.2 L11 13.5Z" fill="#aaa"/></svg>
<div style="left:1657px;top:421px;width:201px;height:18px;background:#1e1e1f;border-radius:3.5px;box-shadow:0 0 0 1px #0c0c0d;"></div>
<span style="left:1664.00px;top:424px;font-size:11px;line-height:14px;color:#ffffff;letter-spacing:-0.133px;">Canvas</span>
<svg style="left:1841px;top:426px" width="11" height="8" viewBox="0 0 11 8" ><path d="M1 1.5 L5.5 6 L10 1.5" fill="none" stroke="#9a9a9e" stroke-width="1.3"/></svg>
<div style="left:1657px;top:446px;width:201px;height:18px;background:#1e1e1f;border-radius:3.5px;box-shadow:0 0 0 1px #0c0c0d;"></div>
<span style="left:1664.00px;top:449px;font-size:11px;line-height:14px;color:#ffffff;letter-spacing:0.238px;">Linear</span>
<svg style="left:1841px;top:451px" width="11" height="8" viewBox="0 0 11 8" ><path d="M1 1.5 L5.5 6 L10 1.5" fill="none" stroke="#9a9a9e" stroke-width="1.3"/></svg>
<svg style="left:1879.9px;top:250.2px" width="9.6" height="9.6" viewBox="0 0 9.6 9.6" ><path d="M4.8 0 L9.6 4.8 L4.8 9.6 L0 4.8Z" fill="#ee4236"/></svg>
<svg style="left:1880.1000000000001px;top:275.4px" width="9.2" height="9.2" viewBox="0 0 9.2 9.2" ><path d="M4.6 0 L9.2 4.6 L4.6 9.2 L0 4.6Z" fill="#a4a4a8"/></svg>
<svg style="left:1880.1000000000001px;top:325.4px" width="9.2" height="9.2" viewBox="0 0 9.2 9.2" ><path d="M4.6 0 L9.2 4.6 L4.6 9.2 L0 4.6Z" fill="#a4a4a8"/></svg>
<svg style="left:1880.1000000000001px;top:350.4px" width="9.2" height="9.2" viewBox="0 0 9.2 9.2" ><path d="M4.6 0 L9.2 4.6 L4.6 9.2 L0 4.6Z" fill="#a4a4a8"/></svg>
<svg style="left:1880.1000000000001px;top:375.4px" width="9.2" height="9.2" viewBox="0 0 9.2 9.2" ><path d="M4.6 0 L9.2 4.6 L4.6 9.2 L0 4.6Z" fill="#a4a4a8"/></svg>
<svg style="left:1880.1000000000001px;top:400.4px" width="9.2" height="9.2" viewBox="0 0 9.2 9.2" ><path d="M4.6 0 L9.2 4.6 L4.6 9.2 L0 4.6Z" fill="#a4a4a8"/></svg>
<svg style="left:1880.1000000000001px;top:425.4px" width="9.2" height="9.2" viewBox="0 0 9.2 9.2" ><path d="M4.6 0 L9.2 4.6 L4.6 9.2 L0 4.6Z" fill="#a4a4a8"/></svg>
<svg style="left:1880.1000000000001px;top:450.4px" width="9.2" height="9.2" viewBox="0 0 9.2 9.2" ><path d="M4.6 0 L9.2 4.6 L4.6 9.2 L0 4.6Z" fill="#a4a4a8"/></svg>
<svg style="left:1880.1000000000001px;top:475.4px" width="9.2" height="9.2" viewBox="0 0 9.2 9.2" ><path d="M4.6 0 L9.2 4.6 L4.6 9.2 L0 4.6Z" fill="#a4a4a8"/></svg>
<svg style="left:1880.1000000000001px;top:500.4px" width="9.2" height="9.2" viewBox="0 0 9.2 9.2" ><path d="M4.6 0 L9.2 4.6 L4.6 9.2 L0 4.6Z" fill="#a4a4a8"/></svg>
<svg style="left:1869px;top:250px" width="8" height="11" viewBox="0 0 8 11" ><path d="M6.5 1 L1.5 5.5 L6.5 10" fill="none" stroke="#9a9a9e" stroke-width="1.3"/></svg>
<div style="left:1769px;top:234px;width:126px;height:33px;border:3px solid #b8ee1e;"></div>
<span style="left:1747.80px;top:238px;font-size:22px;line-height:30px;color:#b8ee1e;letter-spacing:0.000px;font-weight:700;">2</span>
<div style="left:1514px;top:523px;width:390px;height:1px;background:#0c0c0d;"></div>
<span style="left:1535.00px;top:531px;font-size:12.5px;line-height:16px;color:#cacace;letter-spacing:-0.290px;">Reference Size</span>
<div style="left:1499px;top:554px;width:420px;height:1px;background:#0a0a0b;"></div>
<svg style="left:1517px;top:225px" width="12" height="9" viewBox="0 0 12 9" ><path d="M1.5 1.5 L6 6.5 L10.5 1.5" fill="none" stroke="#b8b8bc" stroke-width="1.4"/></svg>
<svg style="left:1519px;top:533px" width="9" height="12" viewBox="0 0 9 12" ><path d="M1.5 1.5 L6.5 6 L1.5 10.5" fill="none" stroke="#b8b8bc" stroke-width="1.4"/></svg>
<svg style="left:1765px;top:142px" width="11" height="8" viewBox="0 0 11 8" ><path d="M1 1.5 L5.5 6 L10 1.5" fill="none" stroke="#8c8c90" stroke-width="1.3"/></svg>
<div style="left:196px;top:812px;width:126.4px;height:24.6px;border:1px solid #0d0d0f;border-radius:4px;background:linear-gradient(#33343a,#2d2e34);overflow:hidden;box-shadow:0 1.5px 2px rgba(0,0,0,.45);"><div style="left:0;bottom:0;width:100%;height:2.1px;background:#6aa420;box-shadow:0 -1px 0 #1b1c1f;"></div></div>
<span style="left:226.70px;top:818px;font-size:11px;line-height:14px;color:#e6e6ea;letter-spacing:0.144px;">Background1</span>
<div style="left:367.3px;top:812px;width:126.1px;height:24.6px;border:1px solid #0d0d0f;border-radius:4px;background:linear-gradient(#33343a,#2d2e34);overflow:hidden;box-shadow:0 1.5px 2px rgba(0,0,0,.45);"><div style="left:0;bottom:0;width:100%;height:2.1px;background:#b4b4b8;box-shadow:0 -1px 0 #1b1c1f;"></div></div>
<span style="left:417.60px;top:818px;font-size:11px;line-height:14px;color:#e6e6ea;letter-spacing:-0.059px;">Grid1</span>
<div style="left:525.2px;top:812px;width:128.4px;height:26.6px;border:1.3px solid #dc483c;border-radius:5px;background:linear-gradient(#40434a,#3a3d43);overflow:hidden;box-shadow:0 1px 2px rgba(0,0,0,.5);"><div style="left:0;bottom:0.6px;width:100%;height:2px;background:#dca877;box-shadow:0 -1px 0 #25262a;"></div></div>
<span style="left:530.90px;top:819px;font-size:11px;line-height:14px;color:#e6e6ea;letter-spacing:0.188px;">Transform1</span>
<div style="left:742px;top:813px;width:126.8px;height:24.6px;border:1px solid #0d0d0f;border-radius:4px;background:linear-gradient(#33343a,#2d2e34);overflow:hidden;box-shadow:0 1.5px 2px rgba(0,0,0,.45);"><div style="left:0;bottom:0;width:100%;height:2.1px;background:#1d7fb0;box-shadow:0 -1px 0 #1b1c1f;"></div></div>
<span style="left:766.10px;top:819px;font-size:11px;line-height:14px;color:#e6e6ea;letter-spacing:0.078px;">ImagePlane3D1</span>
<div style="left:911px;top:814.2px;width:126.6px;height:24.6px;border:1px solid #0d0d0f;border-radius:4px;background:linear-gradient(#33343a,#2d2e34);overflow:hidden;box-shadow:0 1.5px 2px rgba(0,0,0,.45);"><div style="left:0;bottom:0;width:100%;height:2.1px;background:#1d7fb0;box-shadow:0 -1px 0 #1b1c1f;"></div></div>
<span style="left:941.80px;top:820px;font-size:11px;line-height:14px;color:#e6e6ea;letter-spacing:0.052px;">Renderer3D1</span>
<svg style="left:0;top:0" width="1919" height="1033" viewBox="0 0 1919 1033"><path d="M185.4 818.9 L195.4 824.6 L185.4 830.3000000000001Z" fill="#2aa8ec" stroke="#17171a" stroke-width="0.7" /><rect x="327" y="821.4" width="7.6" height="7.6" fill="#fff" stroke="#131316" stroke-width="0.9"/><path d="M335 825.2 H357.4" fill="none" stroke="#e8e8e8" stroke-width="1.2" /><path d="M356.59999999999997 819.3000000000001 L366.6 825.2 L356.59999999999997 831.1Z" fill="#f0c418" stroke="#17171a" stroke-width="0.7" /><path d="M426.70000000000005 801.9 L438.5 801.9 L432.6 811.6Z" fill="#2aa8ec" stroke="#17171a" stroke-width="0.7" /><rect x="498" y="821.6" width="7.6" height="7.6" fill="#fff" stroke="#131316" stroke-width="0.9"/><path d="M506 824.8 L517 826.2" fill="none" stroke="#e8b820" stroke-width="2" /><path d="M515.8 820.7 L525.6 826.6 L515.8 832.5Z" fill="#f0c418" stroke="#17171a" stroke-width="0.7" /><path d="M585.6 802.9 L597.6 802.9 L591.6 812.8Z" fill="#2aa8ec" stroke="#17171a" stroke-width="0.7" /><rect x="657" y="822.8" width="7.6" height="7.6" fill="#fff" stroke="#131316" stroke-width="0.9"/><path d="M665 826.6 H733" fill="none" stroke="#86ba18" stroke-width="2.6" /><path d="M731.8 820.9 L741.8 826.6 L731.8 832.3000000000001Z" fill="#86ba18" stroke="#17171a" stroke-width="0.7" /><path d="M801.5 802.8 L813.3 802.8 L807.4 812.8Z" fill="#f0c418" stroke="#17171a" stroke-width="0.7" /><rect x="872.8" y="823" width="7.6" height="7.6" fill="#fff" stroke="#131316" stroke-width="0.9"/><path d="M881 826.4 L902 827.2" fill="none" stroke="#d8d8d8" stroke-width="1.2" /><path d="M900.9 821.5 L910.8 827.4 L900.9 833.3Z" fill="#f0c418" stroke="#17171a" stroke-width="0.7" /><path d="M970.5 804.0 L982.3 804.0 L976.4 813.8Z" fill="#2aa8ec" stroke="#17171a" stroke-width="0.7" /><rect x="1041.8" y="823.8" width="7.6" height="7.6" fill="#9c9c9c" stroke="#131316" stroke-width="0.9"/><path d="M645 821 L649.8 825.8 L645 830.6 L640.2 825.8Z" fill="#2c2e33" stroke="#fff" stroke-width="1" /><path d="M645 821 L640.2 825.8 L645 830.6Z" fill="#fff"  /><path d="M533.4 840.6 H552.8 V847.4 Q552.8 850 550.2 850 H536 Q533.4 850 533.4 847.4Z" fill="#3b3d44"  /><circle cx="538.9" cy="845.2" r="2.1" fill="#fff"/><circle cx="547" cy="845.2" r="2.1" fill="#0c0c0e"/><path d="M917.8 840 H938 V848.2 Q938 850.8 935.4 850.8 H920.4 Q917.8 850.8 917.8 848.2Z" fill="#303238" stroke="#101012" stroke-width="0.8" /><circle cx="923.8" cy="846" r="2.1" fill="#0c0c0e"/><circle cx="932" cy="846" r="2.1" fill="#fff"/><circle cx="394" cy="291.2" r="50" fill="none" stroke="#d81818" stroke-width="1.9" stroke-dasharray="4 4.4"/><path d="M394.5 291.6 V492" fill="none" stroke="#101010" stroke-width="2.6" /><path d="M394 291.6 V492" fill="none" stroke="#2fae38" stroke-width="1.6" /><path d="M394 292.2 H444.6 V289.6" fill="none" stroke="#101010" stroke-width="1.2" transform="translate(0.6 0.8)"/><path d="M394 291.4 H444.4 V289.4" fill="none" stroke="#f01414" stroke-width="1.3" /><rect x="390.6" y="287.4" width="6.6" height="7.4" rx="1" fill="none" stroke="#2a9a32" stroke-width="1.5"/><rect x="392.4" y="895.4" width="0" height="0"/><path d="M392.2 341.4 H396" fill="none" stroke="#f01414" stroke-width="1.2" /></svg>
<div style="left:1461px;top:629px;width:1px;height:23px;background:#0a0a0b;"></div>
<svg style="left:0;top:0" width="1919" height="1033" viewBox="0 0 1919 1033"><defs><linearGradient id="appg" x1="0" y1="0" x2="0" y2="1"><stop offset="0" stop-color="#16263c"/><stop offset="1" stop-color="#2c4e70"/></linearGradient></defs><rect x="10.6" y="5.6" width="17.8" height="17.8" rx="4" fill="url(#appg)" stroke="#d4d4d8" stroke-width="1.2" /><path d="M19.4 14.5 C18.4 13.2 16.6 12.2 16.6 10.4 A2.8 2.8 0 0 1 22.2 10.4 C22.2 12.2 20.4 13.2 19.4 14.5Z" fill="#27c6f2" transform="rotate(0 19.4 14.9)"/><path d="M19.4 14.5 C18.4 13.2 16.6 12.2 16.6 10.4 A2.8 2.8 0 0 1 22.2 10.4 C22.2 12.2 20.4 13.2 19.4 14.5Z" fill="#f2463a" transform="rotate(120 19.4 14.9)"/><path d="M19.4 14.5 C18.4 13.2 16.6 12.2 16.6 10.4 A2.8 2.8 0 0 1 22.2 10.4 C22.2 12.2 20.4 13.2 19.4 14.5Z" fill="#ece526" transform="rotate(240 19.4 14.9)"/><circle cx="19.4" cy="14.8" r="1.0" fill="#f4f4f0"  opacity="0.85"/><path d="M1824 15 H1835" fill="none" stroke="#4a4a4e" stroke-width="1.2" /><rect x="1861.5" y="11.5" width="8" height="8" rx="1.5" fill="none" stroke="#4a4a4e" stroke-width="1.2" /><path d="M1864 11.5 V10.5 Q1864 9.5 1865 9.5 H1871 Q1872 9.5 1872 10.5 V16.5 Q1872 17.5 1871 17.5 H1870" fill="none" stroke="#4a4a4e" stroke-width="1.2" /><path d="M1897 10 L1907 20 M1907 10 L1897 20" fill="none" stroke="#55555a" stroke-width="1.3" /><rect x="21.5" y="40.5" width="16" height="15" rx="0" fill="none" stroke="#505054" stroke-width="1" /><path d="M24.95 45.7 L29.7 50.7 L34.45 45.7" fill="none" stroke="#7c7c80" stroke-width="1.3" /><path d="M70.2 43.6 L68.6 40.4 L85.6 38.8 L86.4 43" fill="none" stroke="#9a9a9e" stroke-width="1" /><rect x="71.2" y="43.6" width="17.4" height="11.8" rx="1" fill="#18191b" stroke="#ffffff" stroke-width="1.5" /><circle cx="76.5" cy="47.3" r="1.3" fill="#fff"  /><path d="M72.5 54 L77 50.6 L79.5 52.3 L83.6 48 L87.4 51.5 V54.5 H72.5Z" fill="#8a8a8e"  /><path d="M190.6 56.4 L198.6 46.2" fill="none" stroke="#7a7a7e" stroke-width="3.2" stroke-linecap="round"/><path d="M190.8 56.2 L198.4 46.4" fill="none" stroke="#5a5a5e" stroke-width="1.0" stroke-linecap="round"/><path d="M202.7 37.199999999999996 L203.404 39.696 L205.89999999999998 40.4 L203.404 41.104 L202.7 43.6 L201.99599999999998 41.104 L199.5 40.4 L201.99599999999998 39.696Z" fill="#8c8c90"  /><path d="M194.6 40.300000000000004 L195.018 41.782000000000004 L196.5 42.2 L195.018 42.618 L194.6 44.1 L194.182 42.618 L192.7 42.2 L194.182 41.782000000000004Z" fill="#8c8c90"  /><path d="M206.8 45.199999999999996 L207.372 47.227999999999994 L209.4 47.8 L207.372 48.372 L206.8 50.4 L206.228 48.372 L204.20000000000002 47.8 L206.228 47.227999999999994Z" fill="#8c8c90"  /><path d="M202.6 50.6 L203.04 52.160000000000004 L204.6 52.6 L203.04 53.04 L202.6 54.6 L202.16 53.04 L200.6 52.6 L202.16 52.160000000000004Z" fill="#8c8c90"  /><path d="M277.5 42.8 H279.6 V54.2 H277.5" fill="none" stroke="#6c6c70" stroke-width="1.2" /><path d="M303.6 42.8 H301.5 V54.2 H303.6" fill="none" stroke="#6c6c70" stroke-width="1.2" /><rect x="282.4" y="42.4" width="16" height="12" rx="0.5" fill="none" stroke="#6c6c70" stroke-width="1.3" /><circle cx="286.6" cy="46.6" r="1.4" fill="#66666a"  /><path d="M284 53 L287.5 49 L289.6 51.2 L293 46.6 L297 53Z" fill="#58585c"  /><rect x="366" y="46" width="6.8" height="3.9" rx="1.1" fill="none" stroke="#fff" stroke-width="1.35" /><rect x="375.8" y="40.4" width="6.8" height="3.9" rx="1.1" fill="none" stroke="#fff" stroke-width="1.35" /><rect x="375.8" y="51.8" width="6.8" height="3.9" rx="1.1" fill="none" stroke="#fff" stroke-width="1.35" /><path d="M363 48 H366 M372.8 48 L375.8 43 M372.8 48 L375.8 53.4 M382.6 42.4 H385 M382.6 53.8 H385" fill="none" stroke="#fff" stroke-width="1.2" /><path d="M1454 46.4 Q1461 44 1467.4 44.8 Q1469.5 51 1466.6 57.4" fill="none" stroke="#6e6e72" stroke-width="1.3" /><path d="M1461.5 38.6 L1475.4 52.6" fill="none" stroke="#6e6e72" stroke-width="1" /><circle cx="1467.6" cy="44.8" r="2.1" fill="#18191b" stroke="#77777b" stroke-width="1.1" /><rect x="1460.3" y="37.4" width="2.6" height="2.6" rx="0" fill="#18191b" stroke="#77777b" stroke-width="1" /><rect x="1474.1" y="51.3" width="2.6" height="2.6" rx="0" fill="#18191b" stroke="#77777b" stroke-width="1" /><path d="M1549.6 42.9 L1555.0 48.3 L1549.6 53.699999999999996 L1544.1999999999998 48.3Z" fill="none" stroke="#3c3c40" stroke-width="1" /><path d="M1554.8 42.699999999999996 L1560.3999999999999 48.3 L1554.8 53.9 L1549.2 48.3Z" fill="#18191b" stroke="#4c4c50" stroke-width="1" /><path d="M1560.4 42.3 L1566.4 48.3 L1560.4 54.3 L1554.4 48.3Z" fill="#606064" stroke="#8a8a8e" stroke-width="0.9" /><path d="M1662 47.6 L1675 43.4 L1678.6 50.4 L1664.8 55Z" fill="#66666a" stroke="#66666a" stroke-width="1.5" stroke-linejoin="round"/><path d="M1666.4 48.6 L1672.4 46.8 M1667.6 51.8 L1673.6 50" fill="none" stroke="#18191b" stroke-width="1.2" /><circle cx="1677.6" cy="44" r="3.1" fill="none" stroke="#66666a" stroke-width="1.1" /><path d="M1774.6 40.6 L1776 40.8 L1783.5 50.2 L1782.2 51.4 L1774.4 42Z" fill="#fff"  /><path d="M1782.6 50.6 L1785.2 53.4" fill="none" stroke="#fff" stroke-width="1.4" /><path d="M1784.8 51.2 Q1788.5 50.6 1789.4 53.6 Q1790.2 55 1791 55.4 Q1787 56.8 1784.4 55 Q1782.8 53.4 1784.8 51.2Z" fill="#fff"  /><path d="M1775.4 54.6 L1783.6 46.2" fill="none" stroke="#fff" stroke-width="2.4" stroke-linecap="round"/><path d="M1789.3 41.4 A3.3 3.3 0 1 0 1790.6 46.4" fill="none" stroke="#fff" stroke-width="1.9" /><rect x="1881.7" y="40.8" width="15.8" height="7.6" rx="0.5" fill="none" stroke="#7a7a7e" stroke-width="1.3" /><path d="M1885.4 55.6 L1889.6 51.4 L1893.8 55.6" fill="none" stroke="#7a7a7e" stroke-width="1.4" /><path d="M47.0 75.8 L51.5 80.60000000000001 L56.0 75.8" fill="none" stroke="#8e8e92" stroke-width="1.3" /><rect x="75.5" y="71.5" width="17.5" height="12.5" rx="1" fill="#2c2c31" stroke="#6a6a6e" stroke-width="1" /><text x="84.2" y="81.4" font-family="Liberation Sans, sans-serif" font-size="9.5" fill="#8a8a8e" text-anchor="middle">A</text><path d="M103.2 75.8 L107.7 80.60000000000001 L112.2 75.8" fill="none" stroke="#8e8e92" stroke-width="1.3" /><rect x="122.4" y="71.5" width="17" height="12.5" rx="1" fill="#26262b" stroke="#6a6a6e" stroke-width="1" /><rect x="129.6" y="73" width="8.4" height="5.2" rx="0" fill="#7a7a7e"  /><path d="M150.0 75.8 L154.5 80.60000000000001 L159.0 75.8" fill="none" stroke="#8e8e92" stroke-width="1.3" /><rect x="473.5" y="71.5" width="17" height="12.5" rx="1" fill="none" stroke="#6a6a6e" stroke-width="1" /><rect x="477.6" y="75" width="8.8" height="5.6" rx="0" fill="#3a3a3f" stroke="#77777b" stroke-width="0.9" stroke-dasharray="1 1"/><path d="M501.1 75.8 L505.6 80.60000000000001 L510.1 75.8" fill="none" stroke="#8e8e92" stroke-width="1.3" /><path d="M599.8 75.8 L604.3 80.60000000000001 L608.8 75.8" fill="none" stroke="#8e8e92" stroke-width="1.3" /><circle cx="628.3" cy="75" r="4.8" fill="#414145" stroke="#77777b" stroke-width="0.9" /><circle cx="624.4" cy="80.4" r="4.8" fill="#414145" stroke="#77777b" stroke-width="0.9" fill-opacity="0.75"/><circle cx="632.2" cy="80.4" r="4.8" fill="#414145" stroke="#77777b" stroke-width="0.9" fill-opacity="0.75"/><circle cx="628.3" cy="78.8" r="2.2" fill="#66666a"  /><path d="M647.1 75.8 L651.6 80.60000000000001 L656.1 75.8" fill="none" stroke="#8e8e92" stroke-width="1.3" /><rect x="668.9" y="71.4" width="13.2" height="13.2" rx="0" fill="none" stroke="#7c7c80" stroke-width="1" /><path d="M673.3 71.4 V84.6 M677.6999999999999 71.4 V84.6 M668.9 75.8 H682.1 M668.9 80.2 H682.1" fill="none" stroke="#7c7c80" stroke-width="1" /><path d="M693.9 75.8 L698.4 80.60000000000001 L702.9 75.8" fill="none" stroke="#8e8e92" stroke-width="1.3" /><rect x="722.3" y="73.6" width="16" height="10" rx="0" fill="none" stroke="#8a8a8e" stroke-width="1.2" /><circle cx="760.4" cy="78" r="2" fill="#98989c"  /><circle cx="767.6" cy="78" r="2" fill="#98989c"  /><circle cx="774.8" cy="78" r="2" fill="#98989c"  /><path d="M831.5 75.8 L836.0 80.60000000000001 L840.5 75.8" fill="none" stroke="#8e8e92" stroke-width="1.3" /><rect x="860.0" y="71.5" width="17.5" height="12.5" rx="1" fill="#2c2c31" stroke="#6a6a6e" stroke-width="1" /><text x="868.7" y="81.4" font-family="Liberation Sans, sans-serif" font-size="9.5" fill="#8a8a8e" text-anchor="middle">A</text><path d="M887.7 75.8 L892.2 80.60000000000001 L896.7 75.8" fill="none" stroke="#8e8e92" stroke-width="1.3" /><rect x="906.9" y="71.5" width="17" height="12.5" rx="1" fill="#26262b" stroke="#6a6a6e" stroke-width="1" /><rect x="914.1" y="73" width="8.4" height="5.2" rx="0" fill="#7a7a7e"  /><path d="M934.5 75.8 L939.0 80.60000000000001 L943.5 75.8" fill="none" stroke="#8e8e92" stroke-width="1.3" /><rect x="1185.5" y="71.5" width="17" height="12.5" rx="1" fill="none" stroke="#6a6a6e" stroke-width="1" /><rect x="1189.6" y="75" width="8.8" height="5.6" rx="0" fill="#3a3a3f" stroke="#77777b" stroke-width="0.9" stroke-dasharray="1 1"/><path d="M1213.1 75.8 L1217.6 80.60000000000001 L1222.1 75.8" fill="none" stroke="#8e8e92" stroke-width="1.3" /><path d="M1311.8 75.8 L1316.3 80.60000000000001 L1320.8 75.8" fill="none" stroke="#8e8e92" stroke-width="1.3" /><circle cx="1340.3" cy="75" r="4.8" fill="#414145" stroke="#77777b" stroke-width="0.9" /><circle cx="1336.4" cy="80.4" r="4.8" fill="#414145" stroke="#77777b" stroke-width="0.9" fill-opacity="0.75"/><circle cx="1344.2" cy="80.4" r="4.8" fill="#414145" stroke="#77777b" stroke-width="0.9" fill-opacity="0.75"/><circle cx="1340.3" cy="78.8" r="2.2" fill="#66666a"  /><path d="M1359.1 75.8 L1363.6 80.60000000000001 L1368.1 75.8" fill="none" stroke="#8e8e92" stroke-width="1.3" /><rect x="1380.9" y="71.4" width="13.2" height="13.2" rx="0" fill="none" stroke="#7c7c80" stroke-width="1" /><path d="M1385.3000000000002 71.4 V84.6 M1389.7 71.4 V84.6 M1380.9 75.8 H1394.1000000000001 M1380.9 80.2 H1394.1000000000001" fill="none" stroke="#7c7c80" stroke-width="1" /><path d="M1405.9 75.8 L1410.4 80.60000000000001 L1414.9 75.8" fill="none" stroke="#8e8e92" stroke-width="1.3" /><rect x="1434.3" y="73.6" width="16" height="10" rx="0" fill="none" stroke="#8a8a8e" stroke-width="1.2" /><circle cx="1472.4" cy="78" r="2" fill="#98989c"  /><circle cx="1479.6" cy="78" r="2" fill="#98989c"  /><circle cx="1486.8" cy="78" r="2" fill="#98989c"  /><circle cx="1893.2" cy="78" r="2" fill="#98989c"  /><circle cx="1900.4" cy="78" r="2" fill="#98989c"  /><circle cx="1907.6" cy="78" r="2" fill="#98989c"  /><circle cx="1472.9" cy="641" r="2" fill="#98989c"  /><circle cx="1480" cy="641" r="2" fill="#98989c"  /><circle cx="1487" cy="641" r="2" fill="#98989c"  /><g transform="translate(0 0)"><path d="M9.6 98.8 H15.4 M12.5 95.9 V101.7" fill="none" stroke="#a0a0a4" stroke-width="1" /><path d="M20.6 98.6 L25 101 L23.8 103 L19.4 100.6Z" fill="#808084"  /><path d="M19 101.4 L23.4 103.8 L22.6 107.4 L16.4 112 L15.8 111.6 L19.6 106.6 L18.6 106 L15.2 111 L16 104.4Z" fill="#808084"  /><path d="M52.2 97.6 L45.2 108" fill="none" stroke="#808084" stroke-width="3.4" /><path d="M44.5 107.3 L47 109 L43.6 110.8Z" fill="#808084"  /><path d="M46 111.6 H53.8" fill="none" stroke="#808084" stroke-width="1" /><path d="M73.8 99.6 V110 L76.2 107.8 L77.8 111.4 L79.4 110.7 L77.8 107.2 L81 107Z" fill="#fff"  /><path d="M80.2 100.6 H85.6 M82.9 97.9 V103.3" fill="none" stroke="#fff" stroke-width="1.1" /><path d="M103.3 109.8 Q104.6 98 115.6 96.6" fill="none" stroke="#808084" stroke-width="1.1" /><circle cx="106.9" cy="99.9" r="1.7" fill="#212126" stroke="#808084" stroke-width="1" /><path d="M110.4 104 V113 L112.6 111 L114.2 114.2 L115.6 113.5 L114.2 110.5 L117.2 110.2Z" fill="#808084"  /><path d="M134.3 109.8 Q135.6 98 146.6 96.6" fill="none" stroke="#808084" stroke-width="1.1" /><circle cx="137.9" cy="99.9" r="1.7" fill="#212126" stroke="#808084" stroke-width="1" /><rect x="142.8" y="107" width="6.4" height="4.4" rx="0.8" fill="#808084"  /><path d="M144.2 107 V105.6 A1.8 1.8 0 0 1 147.8 105.6" fill="none" stroke="#808084" stroke-width="1.1" /><path d="M165.8 106.8 C166.6 101 170 100.6 171 104.4 C172 108.6 173.4 109.8 175 108.2 C176.6 106.4 177.6 104.6 178.3 102.4" fill="none" stroke="#808084" stroke-width="1.2" /><path d="M175.8 99.6 V110.8" fill="none" stroke="#808084" stroke-width="1.2" /><path d="M200.6 103.6 A6 6 0 1 1 205.6 108.8" fill="none" stroke="#808084" stroke-width="1.2" /><path d="M196.6 108.8 H201.8 M199.2 106.2 V111.4" fill="none" stroke="#808084" stroke-width="1" /><path d="M228.6 105 L237.6 99.4" fill="none" stroke="#808084" stroke-width="1" /><rect x="231.6" y="101" width="2.6" height="2.6" rx="0" fill="#808084"  /><circle cx="238.2" cy="103.4" r="2.4" fill="#808084"  /><path d="M238.2 105 V110.6" fill="none" stroke="#808084" stroke-width="1.5" /><path d="M260.4 110.4 Q262 99.4 272.4 97.6" fill="none" stroke="#808084" stroke-width="1.2" /><circle cx="260.4" cy="110.4" r="1.5" fill="#808084"  /><circle cx="272.4" cy="97.6" r="1.5" fill="#808084"  /><path d="M290.6 109.6 L303.6 97" fill="none" stroke="#808084" stroke-width="1.2" /><circle cx="290.6" cy="109.6" r="1.5" fill="#808084"  /><circle cx="303.6" cy="97" r="1.5" fill="#808084"  /><rect x="318.4" y="96.4" width="18" height="14" rx="0" fill="none" stroke="#77777b" stroke-width="1" stroke-dasharray="1 1.4"/><path d="M321.6 105.6 Q324 110.6 326.6 104.6 Q329 98.6 332 102" fill="none" stroke="#5c5c60" stroke-width="1" /><path d="M329.4 105.2 V114 L331.6 112 L333.2 115.2 L334.6 114.5 L333.2 111.5 L336.2 111.2Z" fill="#808084"  /><path d="M351 103.6 C351 110.6 355.6 111.2 357.2 106.8 L359.6 100.6 C361.2 96 366 96.4 366 103.4" fill="none" stroke="#d8d8dc" stroke-width="1.4" /><circle cx="358.5" cy="103.6" r="2.1" fill="#fff"  /><path d="M349.4 104.8 L351 102 L352.6 104.8Z M364.4 102.4 L366 105.2 L367.6 102.4Z" fill="#d8d8dc"  /><path d="M380.4 109.6 L393.6 96" fill="none" stroke="#d8d8dc" stroke-width="1" /><path d="M387 103.2 Q394 101.6 398.6 106 M387 103.2 Q384.6 108 389 112.6" fill="none" stroke="#d8d8dc" stroke-width="1.3" /><circle cx="387" cy="103.2" r="2.1" fill="#fff"  /><circle cx="380.4" cy="109.6" r="1.1" fill="#d8d8dc"  /><circle cx="393.6" cy="96" r="1.1" fill="#d8d8dc"  /><path d="M412.2 111.8 L413.4 97.6 H428 V103" fill="none" stroke="#aaaaae" stroke-width="1.2" /><path d="M411 108 Q416 100.4 424 99.6 L431 95.6" fill="none" stroke="#8a8a8e" stroke-width="1" /><circle cx="418.4" cy="101.2" r="1.3" fill="#aaaaae"  /><path d="M413 108.6 H421" fill="none" stroke="#8a8a8e" stroke-width="1" /><path d="M421.6 104.6 V113.6 L423.8 111.6 L425.4 114.8 L426.8 114.1 L425.4 111.1 L428.4 110.8Z" fill="#aaaaae"  /><rect x="444.4" y="97.2" width="13.4" height="13.4" rx="2.4" fill="none" stroke="#808084" stroke-width="1.1" /><path d="M447.6 100.4 L454.6 107.4 M454.6 100.4 L447.6 107.4" fill="none" stroke="#9a9a9e" stroke-width="1.3" /><path d="M475 103.6 C475 110.6 479.6 111.2 481.2 106.8 L483.6 100.6 C485.2 96 490 96.4 490 103" fill="none" stroke="#808084" stroke-width="1.1" /><circle cx="482.5" cy="103.6" r="1.6" fill="#808084"  /><path d="M486.4 108.4 L491 112.8 M491 108.4 L486.4 112.8" fill="none" stroke="#808084" stroke-width="1" /><path d="M507 110.6 L516 102.8" fill="none" stroke="#808084" stroke-width="1.2" /><path d="M518.8 96.6 V98.6 M518.8 101.8 V103.6 M515.4 100.2 H517.2 M520.4 100.2 H522.4 M516.4 97.8 L517.4 98.8 M521.2 97.8 L520.2 98.8 M521.2 102.6 L520.2 101.6" fill="none" stroke="#9a9a9e" stroke-width="0.9" /><path d="M534.1 102.0 L538.4 106.4 L542.6999999999999 102.0" fill="none" stroke="#b0b0b4" stroke-width="1.4" /></g><g transform="translate(785 0)"><path d="M9.6 98.8 H15.4 M12.5 95.9 V101.7" fill="none" stroke="#a0a0a4" stroke-width="1" /><path d="M20.6 98.6 L25 101 L23.8 103 L19.4 100.6Z" fill="#808084"  /><path d="M19 101.4 L23.4 103.8 L22.6 107.4 L16.4 112 L15.8 111.6 L19.6 106.6 L18.6 106 L15.2 111 L16 104.4Z" fill="#808084"  /><path d="M52.2 97.6 L45.2 108" fill="none" stroke="#808084" stroke-width="3.4" /><path d="M44.5 107.3 L47 109 L43.6 110.8Z" fill="#808084"  /><path d="M46 111.6 H53.8" fill="none" stroke="#808084" stroke-width="1" /><path d="M73.8 99.6 V110 L76.2 107.8 L77.8 111.4 L79.4 110.7 L77.8 107.2 L81 107Z" fill="#fff"  /><path d="M80.2 100.6 H85.6 M82.9 97.9 V103.3" fill="none" stroke="#fff" stroke-width="1.1" /><path d="M103.3 109.8 Q104.6 98 115.6 96.6" fill="none" stroke="#808084" stroke-width="1.1" /><circle cx="106.9" cy="99.9" r="1.7" fill="#212126" stroke="#808084" stroke-width="1" /><path d="M110.4 104 V113 L112.6 111 L114.2 114.2 L115.6 113.5 L114.2 110.5 L117.2 110.2Z" fill="#808084"  /><path d="M134.3 109.8 Q135.6 98 146.6 96.6" fill="none" stroke="#808084" stroke-width="1.1" /><circle cx="137.9" cy="99.9" r="1.7" fill="#212126" stroke="#808084" stroke-width="1" /><rect x="142.8" y="107" width="6.4" height="4.4" rx="0.8" fill="#808084"  /><path d="M144.2 107 V105.6 A1.8 1.8 0 0 1 147.8 105.6" fill="none" stroke="#808084" stroke-width="1.1" /><path d="M165.8 106.8 C166.6 101 170 100.6 171 104.4 C172 108.6 173.4 109.8 175 108.2 C176.6 106.4 177.6 104.6 178.3 102.4" fill="none" stroke="#808084" stroke-width="1.2" /><path d="M175.8 99.6 V110.8" fill="none" stroke="#808084" stroke-width="1.2" /><path d="M200.6 103.6 A6 6 0 1 1 205.6 108.8" fill="none" stroke="#808084" stroke-width="1.2" /><path d="M196.6 108.8 H201.8 M199.2 106.2 V111.4" fill="none" stroke="#808084" stroke-width="1" /><path d="M228.6 105 L237.6 99.4" fill="none" stroke="#808084" stroke-width="1" /><rect x="231.6" y="101" width="2.6" height="2.6" rx="0" fill="#808084"  /><circle cx="238.2" cy="103.4" r="2.4" fill="#808084"  /><path d="M238.2 105 V110.6" fill="none" stroke="#808084" stroke-width="1.5" /><path d="M260.4 110.4 Q262 99.4 272.4 97.6" fill="none" stroke="#808084" stroke-width="1.2" /><circle cx="260.4" cy="110.4" r="1.5" fill="#808084"  /><circle cx="272.4" cy="97.6" r="1.5" fill="#808084"  /><path d="M290.6 109.6 L303.6 97" fill="none" stroke="#808084" stroke-width="1.2" /><circle cx="290.6" cy="109.6" r="1.5" fill="#808084"  /><circle cx="303.6" cy="97" r="1.5" fill="#808084"  /><rect x="318.4" y="96.4" width="18" height="14" rx="0" fill="none" stroke="#77777b" stroke-width="1" stroke-dasharray="1 1.4"/><path d="M321.6 105.6 Q324 110.6 326.6 104.6 Q329 98.6 332 102" fill="none" stroke="#5c5c60" stroke-width="1" /><path d="M329.4 105.2 V114 L331.6 112 L333.2 115.2 L334.6 114.5 L333.2 111.5 L336.2 111.2Z" fill="#808084"  /><path d="M351 103.6 C351 110.6 355.6 111.2 357.2 106.8 L359.6 100.6 C361.2 96 366 96.4 366 103.4" fill="none" stroke="#d8d8dc" stroke-width="1.4" /><circle cx="358.5" cy="103.6" r="2.1" fill="#fff"  /><path d="M349.4 104.8 L351 102 L352.6 104.8Z M364.4 102.4 L366 105.2 L367.6 102.4Z" fill="#d8d8dc"  /><path d="M380.4 109.6 L393.6 96" fill="none" stroke="#d8d8dc" stroke-width="1" /><path d="M387 103.2 Q394 101.6 398.6 106 M387 103.2 Q384.6 108 389 112.6" fill="none" stroke="#d8d8dc" stroke-width="1.3" /><circle cx="387" cy="103.2" r="2.1" fill="#fff"  /><circle cx="380.4" cy="109.6" r="1.1" fill="#d8d8dc"  /><circle cx="393.6" cy="96" r="1.1" fill="#d8d8dc"  /><path d="M412.2 111.8 L413.4 97.6 H428 V103" fill="none" stroke="#aaaaae" stroke-width="1.2" /><path d="M411 108 Q416 100.4 424 99.6 L431 95.6" fill="none" stroke="#8a8a8e" stroke-width="1" /><circle cx="418.4" cy="101.2" r="1.3" fill="#aaaaae"  /><path d="M413 108.6 H421" fill="none" stroke="#8a8a8e" stroke-width="1" /><path d="M421.6 104.6 V113.6 L423.8 111.6 L425.4 114.8 L426.8 114.1 L425.4 111.1 L428.4 110.8Z" fill="#aaaaae"  /><rect x="444.4" y="97.2" width="13.4" height="13.4" rx="2.4" fill="none" stroke="#808084" stroke-width="1.1" /><path d="M447.6 100.4 L454.6 107.4 M454.6 100.4 L447.6 107.4" fill="none" stroke="#9a9a9e" stroke-width="1.3" /><path d="M475 103.6 C475 110.6 479.6 111.2 481.2 106.8 L483.6 100.6 C485.2 96 490 96.4 490 103" fill="none" stroke="#808084" stroke-width="1.1" /><circle cx="482.5" cy="103.6" r="1.6" fill="#808084"  /><path d="M486.4 108.4 L491 112.8 M491 108.4 L486.4 112.8" fill="none" stroke="#808084" stroke-width="1" /><path d="M507 110.6 L516 102.8" fill="none" stroke="#808084" stroke-width="1.2" /><path d="M518.8 96.6 V98.6 M518.8 101.8 V103.6 M515.4 100.2 H517.2 M520.4 100.2 H522.4 M516.4 97.8 L517.4 98.8 M521.2 97.8 L520.2 98.8 M521.2 102.6 L520.2 101.6" fill="none" stroke="#9a9a9e" stroke-width="0.9" /><path d="M534.1 102.0 L538.4 106.4 L542.6999999999999 102.0" fill="none" stroke="#b0b0b4" stroke-width="1.4" /></g><rect x="327" y="588" width="1" height="30" fill="#3d3d44"/><rect x="498" y="588" width="1" height="30" fill="#3d3d44"/><rect x="709" y="588" width="1" height="30" fill="#3d3d44"/><rect x="920" y="588" width="1" height="30" fill="#3d3d44"/><rect x="1051" y="588" width="1" height="30" fill="#3d3d44"/><defs><pattern id="hatch" width="2.4" height="2.4" patternUnits="userSpaceOnUse" patternTransform="rotate(32)"><rect width="1.1" height="2.4" fill="#9a9a9e"/></pattern><pattern id="dots" width="2" height="2" patternUnits="userSpaceOnUse"><rect width="1" height="1" fill="#8a8a8e"/><rect x="1" y="1" width="1" height="1" fill="#8a8a8e"/></pattern><filter id="blr" x="-20%" y="-20%" width="140%" height="140%"><feGaussianBlur stdDeviation="1.3"/></filter><mask id="fadem" maskUnits="userSpaceOnUse" x="205" y="590" width="36" height="26"><rect x="214.4" y="597.6" width="16.4" height="10.6" fill="#fff" filter="url(#blr)"/></mask><linearGradient id="gr1" x1="0" y1="0" x2="1" y2="1"><stop offset="0" stop-color="#29292e"/><stop offset="1" stop-color="#48484c"/></linearGradient><linearGradient id="gr2" x1="0" y1="0" x2="1" y2="0"><stop offset="0" stop-color="#8a8a8e"/><stop offset="1" stop-color="#4a4a4e"/></linearGradient></defs><rect x="172.4" y="595.4" width="20.2" height="15.2" rx="0.8" fill="#303035" stroke="#8e8e92" stroke-width="1.2" /><path d="M174.6 597.4 L190.6 608.6 H174.6Z" fill="url(#hatch)"  /><rect x="211" y="594.6" width="23" height="17" rx="0" fill="url(#dots)"  mask="url(#fadem)"/><rect x="252" y="595" width="21" height="17" rx="1" fill="#36363b"  /><text x="262.5" y="609.6" font-family="Liberation Serif, serif" font-weight="700" font-size="18" fill="#a2a2a6" text-anchor="middle">T</text><path d="M292 607.6 Q296.6 603.4 299.6 605.2 Q301.4 606.8 298.4 609 Q295.6 611 293.4 610.4" fill="none" stroke="#55555a" stroke-width="1.6" /><path d="M312.8 595 Q306 601 303.6 606.4 L305.4 607.8 Q309.6 603 312.8 595Z" fill="#8a8a8e"  /><path d="M302.8 606.8 L305 608.6 Q303.6 611.6 299.4 611.4 Q301.6 610 302.8 606.8Z" fill="#8a8a8e"  /><circle cx="352.3" cy="595.6" r="1.6" fill="#8a8a8e"  opacity="0.35"/><circle cx="357.25" cy="597.65" r="1.6" fill="#8a8a8e"  opacity="0.5"/><circle cx="359.3" cy="602.6" r="1.6" fill="#8a8a8e"  opacity="0.65"/><circle cx="357.25" cy="607.55" r="1.6" fill="#8a8a8e"  opacity="0.8"/><circle cx="352.3" cy="609.6" r="1.6" fill="#8a8a8e"  opacity="0.9"/><circle cx="347.35" cy="607.55" r="1.6" fill="#8a8a8e"  opacity="0.95"/><circle cx="345.3" cy="602.6" r="1.6" fill="#8a8a8e"  opacity="0.8"/><circle cx="347.35" cy="597.65" r="1.6" fill="#8a8a8e"  opacity="0.6"/><circle cx="352.3" cy="602.6" r="1.7" fill="#8a8a8e"  /><path d="M386 597 V609 H402 V597Z M390 597 V609 M394 597 V609 M398 597 V609 M386 601 H402 M386 605 H402" fill="none" stroke="#55555a" stroke-width="0.9" /><path d="M384.4 609.6 Q392 608 394.6 602.6 Q397.6 596.8 403.6 596" fill="none" stroke="#8a8a8e" stroke-width="1.2" /><circle cx="433.6" cy="603.2" r="4.4" fill="none" stroke="#8a8a8e" stroke-width="1.2" /><path d="M433.6 598.8 A4.4 4.4 0 0 1 433.6 607.6Z" fill="#8a8a8e"  /><path d="M440.20 603.20 L442.20 603.20" fill="none" stroke="#8a8a8e" stroke-width="1.1" /><path d="M438.27 607.87 L439.68 609.28" fill="none" stroke="#8a8a8e" stroke-width="1.1" /><path d="M433.60 609.80 L433.60 611.80" fill="none" stroke="#8a8a8e" stroke-width="1.1" /><path d="M428.93 607.87 L427.52 609.28" fill="none" stroke="#8a8a8e" stroke-width="1.1" /><path d="M427.00 603.20 L425.00 603.20" fill="none" stroke="#8a8a8e" stroke-width="1.1" /><path d="M428.93 598.53 L427.52 597.12" fill="none" stroke="#8a8a8e" stroke-width="1.1" /><path d="M433.60 596.60 L433.60 594.60" fill="none" stroke="#8a8a8e" stroke-width="1.1" /><path d="M438.27 598.53 L439.68 597.12" fill="none" stroke="#8a8a8e" stroke-width="1.1" /><path d="M472 595 Q477.6 602.4 477.6 605.6 A5.6 5.6 0 0 1 466.4 605.6 Q466.4 602.4 472 595Z" fill="#8a8a8e"  /><circle cx="472.6" cy="606.2" r="1.6" fill="#4a4a4e"  /><path d="M519.4 595.6 H536.9 V607.8" fill="none" stroke="#5c5c60" stroke-width="1.1" /><rect x="516.9" y="598.6" width="16.6" height="11.6" rx="1" fill="url(#gr1)" stroke="#8e8e92" stroke-width="1.2" /><rect x="515.4" y="601.6" width="3" height="7" rx="0" fill="#212126"  /><path d="M511.6 600.6 V604.4 Q511.6 606.4 513.6 606.4 H519.4 M516.4 603.2 L519.8 606.4 L516.4 609.6" fill="none" stroke="#8e8e92" stroke-width="1.2" /><path d="M559.4 595.6 H576.9 V607.8" fill="none" stroke="#5c5c60" stroke-width="1.1" /><rect x="556.9" y="598.6" width="16.6" height="11.6" rx="1" fill="url(#gr1)" stroke="#8e8e92" stroke-width="1.2" /><rect x="555.4" y="600.6" width="3" height="9.4" rx="0" fill="#212126"  /><path d="M551.4 597.4 V607 Q551.4 609.2 553.6 609.2 H558 M551.4 603 H558" fill="none" stroke="#8e8e92" stroke-width="1.2" /><path d="M557.4 600.6 L561 603 L557.4 605.4Z M557.4 606.8 L561 609.2 L557.4 611.6Z" fill="#8e8e92"  /><rect x="593.2" y="594" width="15.8" height="10.8" rx="1.2" fill="#4b4b50"  /><rect x="598.8" y="597.8" width="16.8" height="10.8" rx="1.2" fill="#36363b"  /><rect x="596.6" y="601.6" width="15" height="10" rx="1" fill="#26262b" stroke="#9a9a9e" stroke-width="1.3" /><rect x="599.6" y="603.2" width="10" height="6.4" rx="0" fill="url(#dots)"  /><rect x="633.2" y="595.2" width="21.6" height="13.6" rx="1" fill="url(#gr2)"  /><circle cx="644" cy="601.8" r="4" fill="#1c1c20"  /><path d="M634.4 612.8 H654" fill="none" stroke="#6a6a6e" stroke-width="1" /><circle cx="641.6" cy="612.8" r="1.5" fill="#9a9a9e"  /><path d="M679 595.8 H690 M695 601 V610.4 H684 M674.6 605.6 V595.8" fill="none" stroke="none" stroke-width="1.2" /><rect x="676.6" y="596" width="18" height="14" rx="1" fill="#303035"  /><path d="M678.4 596 H690.6 M694.6 600.6 V610 H684 M676.6 605.6 V598 Q676.6 596 678.6 596" fill="none" stroke="#8a8a8e" stroke-width="1.1" /><path d="M690.4 596 Q694.6 596 694.6 601.4 M692.4 599.6 L694.6 601.8 L696.8 599.6" fill="none" stroke="#9a9a9e" stroke-width="1.1" /><path d="M684.4 610 H679 Q676.6 610 676.6 605.4 M674.4 607 L676.6 604.8 L678.8 607" fill="none" stroke="#9a9a9e" stroke-width="1.1" /><rect x="728.6" y="596.8" width="13" height="13" rx="0" fill="none" stroke="#7c7c80" stroke-width="1.1" /><circle cx="728.6" cy="596.8" r="1.4" fill="#212126" stroke="#8a8a8e" stroke-width="0.9" /><circle cx="741.6" cy="596.8" r="1.4" fill="#212126" stroke="#8a8a8e" stroke-width="0.9" /><circle cx="728.6" cy="609.8" r="1.4" fill="#212126" stroke="#8a8a8e" stroke-width="0.9" /><circle cx="741.6" cy="609.8" r="1.4" fill="#212126" stroke="#8a8a8e" stroke-width="0.9" /><circle cx="775.2" cy="603.4" r="7" fill="none" stroke="#7c7c80" stroke-width="1.1" /><circle cx="775.2" cy="596.4" r="1.4" fill="#212126" stroke="#8a8a8e" stroke-width="0.9" /><circle cx="782.2" cy="603.4" r="1.4" fill="#212126" stroke="#8a8a8e" stroke-width="0.9" /><circle cx="775.2" cy="610.4" r="1.4" fill="#212126" stroke="#8a8a8e" stroke-width="0.9" /><circle cx="768.2" cy="603.4" r="1.4" fill="#212126" stroke="#8a8a8e" stroke-width="0.9" /><path d="M805.4 606.4 L812.6 599.6 L818.4 593.6 M812.6 599.6 L825.4 603.4 M812.6 599.6 L813.4 612.4" fill="none" stroke="#7c7c80" stroke-width="1" /><circle cx="805.4" cy="606.4" r="1.3" fill="#212126" stroke="#8a8a8e" stroke-width="0.9" /><circle cx="818.4" cy="593.6" r="1.3" fill="#212126" stroke="#8a8a8e" stroke-width="0.9" /><circle cx="825.4" cy="603.4" r="1.3" fill="#212126" stroke="#8a8a8e" stroke-width="0.9" /><circle cx="813.4" cy="612.4" r="1.3" fill="#212126" stroke="#8a8a8e" stroke-width="0.9" /><circle cx="812.6" cy="599.6" r="1.3" fill="#212126" stroke="#8a8a8e" stroke-width="0.9" /><path d="M844.4 609.4 Q854.6 593 865.6 607.4" fill="none" stroke="#9a9a9e" stroke-width="1.2" /><path d="M844.4 609.4 L847.6 598.4 L857.4 597.2 L865.6 607.4" fill="none" stroke="#55555a" stroke-width="0.8" /><circle cx="844.4" cy="609.4" r="1.3" fill="#212126" stroke="#8a8a8e" stroke-width="0.9" /><circle cx="847.6" cy="598.4" r="1.3" fill="#212126" stroke="#8a8a8e" stroke-width="0.9" /><circle cx="857.4" cy="597.2" r="1.3" fill="#212126" stroke="#8a8a8e" stroke-width="0.9" /><circle cx="865.6" cy="607.4" r="1.3" fill="#212126" stroke="#8a8a8e" stroke-width="0.9" /><path d="M883 600.6 Q887 594.6 891.6 598.6 Q896 602.8 900 598 Q903 594.8 906.4 597" fill="none" stroke="#7c7c80" stroke-width="1.1" /><path d="M883 606 Q886 603 889 605.4 Q893.4 611.4 898 607 Q902 603.6 906 607.6" fill="none" stroke="#7c7c80" stroke-width="1.1" /><path d="M889.6 596.8 L898.2 596 L906.6 596.6 M883 605.4 L892 605 L900.6 605" fill="none" stroke="#55555a" stroke-width="0.8" /><circle cx="889.6" cy="596.8" r="1.2" fill="#212126" stroke="#77777b" stroke-width="0.8" /><circle cx="898.2" cy="596" r="1.2" fill="#212126" stroke="#77777b" stroke-width="0.8" /><circle cx="906.8" cy="596.6" r="1.2" fill="#212126" stroke="#77777b" stroke-width="0.8" /><circle cx="883" cy="605.4" r="1.2" fill="#212126" stroke="#77777b" stroke-width="0.8" /><circle cx="892" cy="605" r="1.2" fill="#212126" stroke="#77777b" stroke-width="0.8" /><circle cx="900.6" cy="605" r="1.2" fill="#212126" stroke="#77777b" stroke-width="0.8" /><path d="M936 607.6 L945.4 604.6 L948.4 608.4 L939.4 611.6Z" fill="none" stroke="#6a6a6e" stroke-width="0.9" /><circle cx="943.7" cy="601.4" r="0.75" fill="#8a8a8e"  /><circle cx="946.1" cy="599.8" r="0.75" fill="#8a8a8e"  /><circle cx="943.3" cy="605.5" r="0.75" fill="#8a8a8e"  /><circle cx="956.7" cy="598.1" r="0.75" fill="#8a8a8e"  /><circle cx="951.3" cy="595.9" r="0.75" fill="#8a8a8e"  /><circle cx="948.6" cy="599.0" r="0.75" fill="#8a8a8e"  /><circle cx="942.9" cy="602.2" r="0.75" fill="#8a8a8e"  /><circle cx="948.4" cy="607.4" r="0.75" fill="#8a8a8e"  /><circle cx="955.6" cy="599.2" r="0.75" fill="#8a8a8e"  /><circle cx="951.6" cy="595.2" r="0.75" fill="#8a8a8e"  /><circle cx="947.8" cy="604.2" r="0.75" fill="#8a8a8e"  /><circle cx="954.6" cy="600.7" r="0.75" fill="#8a8a8e"  /><circle cx="952.0" cy="593.5" r="0.75" fill="#8a8a8e"  /><circle cx="951.9" cy="600.9" r="0.75" fill="#8a8a8e"  /><circle cx="947.6" cy="598.7" r="0.75" fill="#8a8a8e"  /><circle cx="946.7" cy="598.4" r="0.75" fill="#8a8a8e"  /><circle cx="973.6" cy="594.6" r="0.8" fill="#8a8a8e"  /><circle cx="977.8000000000001" cy="594.6" r="0.8" fill="#8a8a8e"  /><circle cx="982.0" cy="594.6" r="0.8" fill="#8a8a8e"  /><circle cx="986.2" cy="594.6" r="0.8" fill="#8a8a8e"  /><circle cx="990.4" cy="594.6" r="0.8" fill="#8a8a8e"  /><circle cx="975.8" cy="597.6" r="0.8" fill="#8a8a8e"  /><circle cx="980.0" cy="597.6" r="0.8" fill="#8a8a8e"  /><circle cx="984.1999999999999" cy="597.6" r="0.8" fill="#8a8a8e"  /><circle cx="988.4" cy="597.6" r="0.8" fill="#8a8a8e"  /><path d="M975.6 603.6 A4.6 4.6 0 0 0 984.2 606.4" fill="none" stroke="#8a8a8e" stroke-width="3" /><path d="M985.6 606.4 H997.6 M991.6 600.4 V612.4 M989.6 602.2 L991.6 600.2 L993.6 602.2 M989.6 610.6 L991.6 612.6 L993.6 610.6 M987.4 604.4 L985.4 606.4 L987.4 608.4 M995.8 604.4 L997.8 606.4 L995.8 608.4" fill="none" stroke="#9a9a9e" stroke-width="1" /><rect x="1017.4" y="595.8" width="17.6" height="9.6" rx="0" fill="#35353a"  /><path d="M1015.4 597.4 V593.8 H1019.4 M1033 607.4 H1037 V603.6" fill="none" stroke="#9a9a9e" stroke-width="1.1" /><circle cx="1026.0" cy="599.6" r="0.7" fill="#9a9a9e"  /><circle cx="1021.8" cy="603.1" r="0.7" fill="#9a9a9e"  /><circle cx="1020.1" cy="600.5" r="0.7" fill="#9a9a9e"  /><circle cx="1031.7" cy="597.6" r="0.7" fill="#9a9a9e"  /><circle cx="1027.2" cy="601.3" r="0.7" fill="#9a9a9e"  /><circle cx="1020.5" cy="599.7" r="0.7" fill="#9a9a9e"  /><circle cx="1029.1" cy="600.2" r="0.7" fill="#9a9a9e"  /><circle cx="1029.4" cy="598.1" r="0.7" fill="#9a9a9e"  /><circle cx="1023.1" cy="597.8" r="0.7" fill="#9a9a9e"  /><circle cx="1026.6" cy="603.5" r="0.7" fill="#9a9a9e"  /><circle cx="1027.7" cy="602.4" r="0.7" fill="#9a9a9e"  /><circle cx="1025.0" cy="602.2" r="0.7" fill="#9a9a9e"  /><path d="M1020.6 611.6 Q1026 607.6 1032 607" fill="none" stroke="#6a6a6e" stroke-width="1" stroke-dasharray="1.4 1.4"/><path d="M1063.6 608.8 L1076.6 603.1999999999999 L1089.6 608.8 L1076.6 614.4Z" fill="#38383d"  /><path d="M1071 598 L1083.6 594.4 V605.4 L1071 609.4Z" fill="#77777b"  /><path d="M1103 608.8 L1116 603.1999999999999 L1129 608.8 L1116 614.4Z" fill="#38383d"  /><path d="M1105.6 605.6 L1110.4 593.8 L1115 605.4 Q1110.4 608.4 1105.6 605.6Z" fill="#6a6a6e"  /><path d="M1120.4 597.6 L1124.6 596 L1128 597.6 V603.4 L1124 605.4 L1120.4 603.4Z" fill="#6a6a6e"  /><path d="M1120.4 597.6 L1124 599.2 L1128 597.6 M1124 599.2 V605" fill="none" stroke="#8a8a8e" stroke-width="0.7" /><circle cx="1116.8" cy="605.2" r="4.9" fill="#808084"  /><path d="M1143.4 608.8 L1156.4 603.1999999999999 L1169.4 608.8 L1156.4 614.4Z" fill="#38383d"  /><text x="1159.4" y="606" font-family="Liberation Serif, serif" font-weight="700" font-size="18" fill="#9a9a9e" text-anchor="middle">T</text><path d="M1183.4 608.8 L1196.4 603.1999999999999 L1209.4 608.8 L1196.4 614.4Z" fill="#38383d"  /><path d="M1186 599 V602 Q1186 604.2 1188.2 604.2 H1192.4 M1190.4 602 L1192.8 604.2 L1190.4 606.4" fill="none" stroke="#8a8a8e" stroke-width="1.1" /><circle cx="1201" cy="601.8" r="4.8" fill="#8a8a8e"  /><path d="M1223.6 608.8 L1236.6 603.1999999999999 L1249.6 608.8 L1236.6 614.4Z" fill="#38383d"  /><path d="M1228 596 L1240 594.2 L1246 597.6 V605.6 L1237.4 608.4 L1228 604.4Z" fill="#2c2c31" stroke="#8a8a8e" stroke-width="1.1" /><path d="M1228 596 L1237.4 599.4 L1246 597.6 M1237.4 599.4 V608.4" fill="none" stroke="#8a8a8e" stroke-width="0.9" /><circle cx="1244.4" cy="602.6" r="3.5" fill="#2c2c31" stroke="#8a8a8e" stroke-width="1" /><rect x="1230.4" y="599.2" width="3" height="2.6" rx="0" fill="none" stroke="#8a8a8e" stroke-width="0.8" /><path d="M1263.4 608.8 L1276.4 603.1999999999999 L1289.4 608.8 L1276.4 614.4Z" fill="#38383d"  /><path d="M1268.6 596.6 L1272.6 595.6 L1275.4 600.6 L1270.6 602.2Z" fill="#8a8a8e"  /><circle cx="1277.6" cy="601.8" r="4.2" fill="#55555a" stroke="#8a8a8e" stroke-width="1" /><path d="M1283.4 598.6 L1286 597.4 M1284.4 602.4 H1287 M1282.6 606 L1284.6 607.6 M1278.6 608 L1279.6 610.2" fill="none" stroke="#8a8a8e" stroke-width="0.9" /><path d="M1303.2 608.8 L1316.2 603.1999999999999 L1329.2 608.8 L1316.2 614.4Z" fill="#38383d"  /><path d="M1306 598.4 V594.6 H1310 M1324 604.4 H1328 V600.6" fill="none" stroke="#9a9a9e" stroke-width="1.1" /><rect x="1310" y="596.4" width="16" height="8.4" rx="0" fill="#3c3c41"  /><path d="M1310.4 602.8 A6.2 6.2 0 0 1 1322.8 602.8Z" fill="#8a8a8e"  /><path d="M1310.4 603.4 H1322.8 A6.2 6.2 0 0 1 1310.4 603.4Z" fill="#4a4a4e"  /><path d="M146.4 558 H149.4 L153.6 554.4 V566.8 L149.4 563.2 H146.4Z" fill="none" stroke="#e4e4e6" stroke-width="1.3" stroke-linejoin="round"/><path d="M156.4 558 Q158.2 560.6 156.4 563.2" fill="none" stroke="#e4e4e6" stroke-width="1.3" /><path d="M159 555.6 Q162.6 560.6 159 565.6" fill="none" stroke="#e4e4e6" stroke-width="1.3" /><rect x="655.6" y="554.4" width="2.2" height="12.2" rx="0" fill="#8c8c8e"  /><path d="M666 554.4 V566.6 L658.4 560.5Z M675.6 554.4 V566.6 L667 560.5Z" fill="#8c8c8e"  /><path d="M704 554.4 V566.6 L693.4 560.5Z" fill="#8c8c8e"  /><rect x="724" y="554.4" width="12.6" height="12.6" rx="0" fill="#8c8c8e"  /><path d="M756.2 554.4 V566.6 L767.2 560.5Z" fill="#8c8c8e"  /><path d="M784.8 554.4 V566.6 L793.4 560.5Z M794.4 554.4 V566.6 L803 560.5Z" fill="#8c8c8e"  /><rect x="802.8" y="554.4" width="2.2" height="12.2" rx="0" fill="#8c8c8e"  /><path d="M831.6 556.8 H838.6 Q843.8 556.8 843.8 561.8 Q843.8 566.8 838.6 566.8 H829 Q823.8 566.8 823.8 561.8 Q823.8 557.6 827.6 556.9" fill="none" stroke="#e8483c" stroke-width="1.7" stroke-linecap="round"/><path d="M833.6 553.6 L837.2 556.8 L833.6 560" fill="none" stroke="#e8483c" stroke-width="1.7" stroke-linecap="round" stroke-linejoin="round"/><path d="M1804.4 142.6 V140.4 H1816.4 V148.6 H1813.8" fill="none" stroke="#66666a" stroke-width="1.2" stroke-linejoin="round"/><rect x="1801.6" y="142.8" width="12" height="8.4" rx="1" fill="none" stroke="#66666a" stroke-width="1.3" /><path d="M1837.6 139.4 L1843.4 145 L1841.8 146 L1840.4 145.4 L1837.6 148 L1837.2 150.2 L1835.6 150.4 L1832.4 147.2 L1832.6 145.6 L1834.8 145.2 L1837.4 142.4 L1836.8 141Z" fill="#6e6e72"  /><path d="M1834.4 148.4 L1830.6 151.6" fill="none" stroke="#6e6e72" stroke-width="1.2" /><rect x="1859.6" y="145.6" width="11" height="6.4" rx="1" fill="none" stroke="#66666a" stroke-width="1.3" /><path d="M1862.2 145.4 V142.8 Q1862.2 140 1865.2 140 H1866.6 Q1869.6 140 1869.6 142.8" fill="none" stroke="#66666a" stroke-width="1.3" /><path d="M1887.2 142.6 A6 6 0 1 1 1886.4 147.2" fill="none" stroke="#66666a" stroke-width="1.2" /><path d="M1885 140.2 L1886.8 143.4 L1890 142.2" fill="none" stroke="#66666a" stroke-width="1.1" /><path d="M1889.6 145.8 H1895.2 M1892.4 143 V148.6" fill="none" stroke="#66666a" stroke-width="1.1" /><rect x="1670.4" y="171.4" width="19.4" height="14" rx="0" fill="#4b4b50"  /><path d="M1674 171 H1686 Q1690 171 1690 175.6 M1690 180 V185.6 H1676 M1670 176.4 V173 Q1670 171 1672 171" fill="none" stroke="#f0f0f0" stroke-width="1.3" /><path d="M1687.6 174.2 L1690 176.8 L1692.4 174.2" fill="none" stroke="#f0f0f0" stroke-width="1.3" /><path d="M1676.4 185.6 H1672.6 Q1669.4 185.6 1669.4 181.6 V180.4" fill="none" stroke="#f0f0f0" stroke-width="1.3" /><path d="M1667 182.6 L1669.4 180 L1671.8 182.6" fill="none" stroke="#f0f0f0" stroke-width="1.3" /><defs><linearGradient id="gr3" x1="0" y1="0" x2="1" y2="1"><stop offset="0" stop-color="#2a2a2f"/><stop offset="1" stop-color="#46464b"/></linearGradient></defs><rect x="1727.6" y="171" width="20" height="14.6" rx="0.5" fill="url(#gr3)" stroke="#66666a" stroke-width="1" /><circle cx="1747" cy="180.6" r="5.4" fill="#28282e"  /><path d="M1750.33 179.22 L1750.49 179.73 L1751.93 179.78 L1751.93 181.42 L1750.49 181.47 L1750.33 181.98 L1750.08 182.46 L1751.07 183.51 L1749.91 184.67 L1748.86 183.68 L1748.38 183.93 L1747.87 184.09 L1747.82 185.53 L1746.18 185.53 L1746.13 184.09 L1745.62 183.93 L1745.14 183.68 L1744.09 184.67 L1742.93 183.51 L1743.92 182.46 L1743.67 181.98 L1743.51 181.47 L1742.07 181.42 L1742.07 179.78 L1743.51 179.73 L1743.67 179.22 L1743.92 178.74 L1742.93 177.69 L1744.09 176.53 L1745.14 177.52 L1745.62 177.27 L1746.13 177.11 L1746.18 175.67 L1747.82 175.67 L1747.87 177.11 L1748.38 177.27 L1748.86 177.52 L1749.91 176.53 L1751.07 177.69 L1750.08 178.74 Z M1749.1 180.6 A2.1 2.1 0 1 0 1744.9 180.6 A2.1 2.1 0 1 0 1749.1 180.6Z" fill="#8a8a8e"  fill-rule="evenodd"/><path d="M55 1009.7 C53.6 1007.9 51 1006.5 51 1004.5 A4 4 0 0 1 59 1004.5 C59 1006.5 56.4 1007.9 55 1009.7Z" fill="#ececec" transform="rotate(0 55 1010.4)"/><path d="M55 1009.7 C53.6 1007.9 51 1006.5 51 1004.5 A4 4 0 0 1 59 1004.5 C59 1006.5 56.4 1007.9 55 1009.7Z" fill="#ececec" transform="rotate(120 55 1010.4)"/><path d="M55 1009.7 C53.6 1007.9 51 1006.5 51 1004.5 A4 4 0 0 1 59 1004.5 C59 1006.5 56.4 1007.9 55 1009.7Z" fill="#ececec" transform="rotate(240 55 1010.4)"/><rect x="593" y="996.6" width="16.4" height="11" rx="1" fill="none" stroke="#6e6e72" stroke-width="1.3" /><path d="M594.4 994.4 H608 M595.8 992.4 H606.6" fill="none" stroke="#505054" stroke-width="1" /><circle cx="596.8" cy="999.6" r="1.1" fill="#6e6e72"  /><path d="M595 1005.8 L598.6 1001.8 L601 1004 L604 1000.8 L607.6 1005.8Z" fill="none" stroke="none" stroke-width="1.2" /><path d="M595.4 1005.6 L598.6 1002 L601 1004.2 L604 1001 L607.4 1005.6" fill="none" stroke="#6e6e72" stroke-width="1" /><path d="M715.6 994.2 H729.6 Q732.6 994.2 732 996.6 L730.6 1002.6 Q730 1005 727 1005 H713Z" fill="none" stroke="none" stroke-width="1.2" /><path d="M716.4 994.4 H730 Q732.4 994.4 732 996.4 L730.6 1002.6 Q730.2 1004.6 728 1004.6 H714.2 L716.4 994.4Z" fill="#2c2c30" stroke="#6e6e72" stroke-width="1.2" /><path d="M724 990.8 L720.4 1007.6" fill="none" stroke="#18191b" stroke-width="2.4" /><path d="M724 990.8 L720.4 1007.6" fill="none" stroke="#6e6e72" stroke-width="1" /><path d="M708.6 996.6 H714.6 M707.4 999.6 H713.6 M709.6 1002.6 H712.6" fill="none" stroke="#6e6e72" stroke-width="1.1" /><circle cx="726.8" cy="997" r="0.6" fill="#6e6e72"  /><circle cx="729.4" cy="997" r="0.6" fill="#6e6e72"  /><circle cx="726" cy="1002" r="0.6" fill="#6e6e72"  /><circle cx="728.6" cy="1002" r="0.6" fill="#6e6e72"  /><path d="M841.5 992.6 V1008.6" fill="none" stroke="#6e6e72" stroke-width="1" /><circle cx="841.5" cy="991.8" r="1.2" fill="#18191b" stroke="#6e6e72" stroke-width="0.9" /><path d="M832.8000000000001 996.6 H838.1999999999999" fill="none" stroke="#6e6e72" stroke-width="2.5" stroke-linecap="round"/><path d="M835.4000000000001 1000.6 H838.1999999999999" fill="none" stroke="#6e6e72" stroke-width="2.5" stroke-linecap="round"/><path d="M831.2 1004.6 H838.1999999999999" fill="none" stroke="#6e6e72" stroke-width="2.5" stroke-linecap="round"/><path d="M844.8000000000001 996.6 H849.8" fill="none" stroke="#6e6e72" stroke-width="2.5" stroke-linecap="round"/><path d="M844.8000000000001 1000.6 H847.8" fill="none" stroke="#6e6e72" stroke-width="2.5" stroke-linecap="round"/><path d="M844.8000000000001 1004.6 H851.0" fill="none" stroke="#6e6e72" stroke-width="2.5" stroke-linecap="round"/><defs><linearGradient id="wand" x1="0" y1="0" x2="1" y2="0"><stop offset="0" stop-color="#8a8a8e"/><stop offset="0.5" stop-color="#e8e8ec"/><stop offset="1" stop-color="#9a9a9e"/></linearGradient></defs><defs><filter id="blr2" x="-40%" y="-40%" width="180%" height="180%"><feGaussianBlur stdDeviation="0.9"/></filter></defs><path d="M953.2 1006.4 Q957 1003.6 956 999.8 Q955.4 995.8 960 993.4" fill="none" stroke="#56561e" stroke-width="3.6" stroke-linecap="round" filter="url(#blr2)"/><path d="M969.4 994.6 L961.2 1006.8" fill="none" stroke="#c8c8cc" stroke-width="3.4" stroke-linecap="round"/><path d="M969.2 995 L961.4 1006.4" fill="none" stroke="#77777b" stroke-width="1" transform="translate(0.9 0.5)"/><path d="M963.2 988.6 L963.772 990.628 L965.8000000000001 991.2 L963.772 991.772 L963.2 993.8000000000001 L962.628 991.772 L960.6 991.2 L962.628 990.628Z" fill="#ece83a"  /><path d="M954.4 991.9 L954.9499999999999 993.85 L956.9 994.4 L954.9499999999999 994.9499999999999 L954.4 996.9 L953.85 994.9499999999999 L951.9 994.4 L953.85 993.85Z" fill="#ece83a"  /><path d="M959.4 996.1 L959.928 997.972 L961.8 998.5 L959.928 999.028 L959.4 1000.9 L958.872 999.028 L957.0 998.5 L958.872 997.972Z" fill="#ece83a"  /><circle cx="1081.42" cy="992.71" r="1.5" fill="#77777b"  opacity="0.3"/><circle cx="1085.56" cy="995.1" r="1.5" fill="#77777b"  opacity="0.4"/><circle cx="1087.2" cy="999.6" r="1.5" fill="#77777b"  opacity="0.55"/><circle cx="1085.56" cy="1004.1" r="1.5" fill="#77777b"  opacity="0.7"/><circle cx="1081.42" cy="1006.49" r="1.5" fill="#77777b"  opacity="0.85"/><circle cx="1076.7" cy="1005.66" r="1.5" fill="#77777b"  opacity="0.95"/><circle cx="1073.62" cy="1001.99" r="1.5" fill="#77777b"  opacity="1"/><circle cx="1073.62" cy="997.21" r="1.5" fill="#77777b"  opacity="0.95"/><circle cx="1076.7" cy="993.54" r="1.5" fill="#77777b"  opacity="0.8"/><circle cx="1080.2" cy="999.6" r="1.7" fill="#77777b"  /><path d="M1198.6 996 L1206.6 994 V1003.8 M1198.6 995.6 V1005.6" fill="none" stroke="#6e6e72" stroke-width="1.5" /><path d="M1198.2 993.6 L1207.2 991.6 V994.8 L1198.2 996.8Z" fill="#6e6e72"  /><ellipse cx="1196.2" cy="1005.4" rx="2.7" ry="2" fill="#6e6e72" transform="rotate(-20 1196.2 1005.4)"/><ellipse cx="1204.4" cy="1003.6" rx="2.7" ry="2" fill="#6e6e72" transform="rotate(-20 1204.4 1003.6)"/><path d="M1327.6 991.2 Q1321.6 991.6 1318.4 996.4 L1315.4 1001.4 L1318.6 1004.6 L1323.6 1001.6 Q1327.6 998 1327.6 991.2Z" fill="none" stroke="#6e6e72" stroke-width="1.2" stroke-linejoin="round"/><circle cx="1322.8" cy="996.4" r="1.5" fill="none" stroke="#6e6e72" stroke-width="1" /><path d="M1317.6 997.4 L1313.4 998.6 L1315.4 1001 M1322.4 1002.4 L1321.4 1006.8 L1318.8 1004.6 M1315.6 1003.2 L1313.4 1005.4" fill="none" stroke="#6e6e72" stroke-width="1.1" stroke-linejoin="round"/><path d="M1836.5 1001.8 L1844 1010 H1842.2 V1015.2 H1838.2 V1010.6 H1834.9 V1015.2 H1831 V1010 H1829.2Z" fill="#909094"  /><path d="M1890.57 1006.46 L1890.83 1007.25 L1893.00 1007.34 L1893.00 1009.86 L1890.83 1009.95 L1890.57 1010.74 L1890.20 1011.49 L1891.66 1013.08 L1889.88 1014.86 L1888.29 1013.40 L1887.54 1013.77 L1886.75 1014.03 L1886.66 1016.20 L1884.14 1016.20 L1884.05 1014.03 L1883.26 1013.77 L1882.51 1013.40 L1880.92 1014.86 L1879.14 1013.08 L1880.60 1011.49 L1880.23 1010.74 L1879.97 1009.95 L1877.80 1009.86 L1877.80 1007.34 L1879.97 1007.25 L1880.23 1006.46 L1880.60 1005.71 L1879.14 1004.12 L1880.92 1002.34 L1882.51 1003.80 L1883.26 1003.43 L1884.05 1003.17 L1884.14 1001.00 L1886.66 1001.00 L1886.75 1003.17 L1887.54 1003.43 L1888.29 1003.80 L1889.88 1002.34 L1891.66 1004.12 L1890.20 1005.71 Z M1888.5 1008.6 A3.1 3.1 0 1 0 1882.3000000000002 1008.6 A3.1 3.1 0 1 0 1888.5 1008.6Z" fill="#909094"  fill-rule="evenodd"/></svg>
</div></body></html>
